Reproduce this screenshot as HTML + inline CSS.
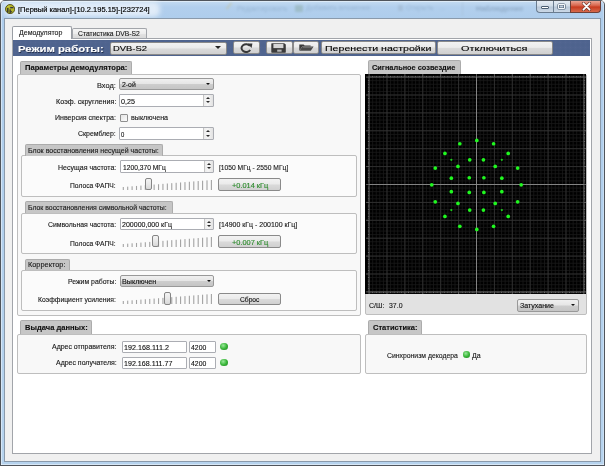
<!DOCTYPE html>
<html><head><meta charset="utf-8"><style>
html,body{margin:0;padding:0;width:605px;height:466px;overflow:hidden;background:#fff}
#root{position:relative;width:605px;height:466px;overflow:hidden;font-family:"Liberation Sans", sans-serif;filter:blur(0.3px)}
#root div{position:absolute}
.t{white-space:nowrap;transform-origin:0 0}
svg{display:block}
</style></head><body><div id="root">
<div style="left:0;top:0;width:605px;height:466px;background:#50555c;border-radius:5px 5px 0 0"></div>
<div style="left:1px;top:1px;width:603px;height:464px;background:linear-gradient(180deg,#c4dbf1 0px,#b2cfed 6px,#aecdec 18px,#b6d3ee 100%);border-radius:4px 4px 0 0;box-shadow:inset 1px 0 0 rgba(255,255,255,0.45),inset -1px 0 0 rgba(255,255,255,0.3),inset 0 -1px 0 rgba(255,255,255,0.45)"></div>
<div style="left:4px;top:2px;width:156px;height:15px;background:rgba(240,246,252,0.75);border-radius:6px;filter:blur(2.5px)"></div>
<div style="left:1px;top:1px;width:603px;height:1px;background:rgba(255,255,255,0.45)"></div>
<div style="left:0;top:0;width:605px;height:18px;filter:blur(0.9px);opacity:0.45"><div style="left:225px;top:5px;width:8px;height:2px;background:#c8c090;transform:rotate(-50deg)"></div><div class="t" style="left:237px;top:4px;font-size:7.3px;color:#7f9cb8">Редактировать</div><div style="left:295px;top:5px;width:8px;height:7px;background:#8aa8a0;border-radius:1px"></div><div class="t" style="left:306px;top:4px;font-size:7px;color:#7f9cb8">Добавить вложение</div><div style="left:398px;top:5px;width:5px;height:6px;background:#9ab0c6"></div><div class="t" style="left:406px;top:4px;font-size:7px;color:#7f9cb8">Открыть &nbsp; ...</div><div style="left:462px;top:2px;width:1px;height:14px;background:#9fb6cc"></div><div class="t" style="left:476px;top:4px;font-size:7.5px;font-weight:700;color:#6d859e">Наблюдение</div></div>
<div style="left:4.00px;top:17.50px;width:597.00px;height:444.00px;background:#f0f0f0;border:1px solid #8a9aab;box-sizing:border-box"></div>
<div style="left:5.1px;top:4px;width:10.2px;height:10.2px"><svg width="10.2" height="10.2" viewBox="0 0 10.2 10.2"><circle cx="5.1" cy="5.1" r="4.6" fill="#b4b428" stroke="#4d4d14" stroke-width="0.9"/><path d="M2.6 2.8 Q3.6 2 4.4 2.4" stroke="#d8d860" stroke-width="0.8" fill="none"/><rect x="2.1" y="4.0" width="1.4" height="4.6" fill="#33332f"/><rect x="5.2" y="3.0" width="3.2" height="1.3" fill="#363644"/><rect x="4.5" y="5.4" width="1.3" height="3.9" fill="#33332f"/><path d="M5.6 6.6 L7.4 7.8 L5.6 9.0 Z" fill="#3c3c3a"/></svg></div>
<div class="t" style="left:18.30px;top:5px;font-size:7.558px;line-height:9.070px;color:#000;font-weight:400;transform:scaleX(0.9928);-webkit-text-stroke:0.18px #000;">[Первый канал]-[10.2.195.15]-[232724]</div>
<div style="left:536.00px;top:0.50px;width:17.50px;height:12.00px;background:linear-gradient(180deg,#e4ebf3,#d0dbe7 45%,#b9c8d9 55%,#cbd8e6);border:1px solid #6a7c90;border-top:none;border-right:none;border-radius:0 0 0 4px;box-sizing:border-box"></div>
<div style="left:553.30px;top:0.50px;width:16.90px;height:12.00px;background:linear-gradient(180deg,#e4ebf3,#d0dbe7 45%,#b9c8d9 55%,#cbd8e6);border:1px solid #6a7c90;border-top:none;border-right:none;box-sizing:border-box"></div>
<div style="left:570.00px;top:0.50px;width:30.80px;height:12.00px;background:linear-gradient(180deg,#eaa594,#d9684f 40%,#c83c20 55%,#d76a4c);border:1px solid #6e4038;border-top:none;border-radius:0 0 4px 0;box-sizing:border-box"></div>
<div style="left:541.40px;top:6.00px;width:7.40px;height:3.20px;background:#fff;border:0.8px solid #4a5d72;border-radius:1px;box-sizing:border-box"></div>
<div style="left:558.00px;top:3.60px;width:7.20px;height:5.80px;border:1.5px solid #f6f8fa;box-shadow:0 0 0 0.6px #4a5d72, inset 0 0 0 0.6px #4a5d72;border-radius:1px;box-sizing:border-box"></div>
<div style="left:580.5px;top:2.2px;width:11px;height:9px"><svg width="11" height="9" viewBox="0 0 11 9"><path d="M2.4 1.3L8.6 7.7M8.6 1.3L2.4 7.7" stroke="#6a3328" stroke-width="3" stroke-linecap="round"/><path d="M2.4 1.3L8.6 7.7M8.6 1.3L2.4 7.7" stroke="#fff" stroke-width="1.8" stroke-linecap="round"/></svg></div>
<div style="left:12.00px;top:38.00px;width:580.00px;height:415.60px;background:#fff;border:1px solid #a2a5aa;box-sizing:border-box"></div>
<div style="left:71.80px;top:27.80px;width:75.20px;height:10.70px;background:linear-gradient(180deg,#f6f6f6,#ededed 50%,#e3e3e3 51%,#dadada);border:1px solid #a2a5aa;border-bottom:none;border-radius:2px 2px 0 0;box-sizing:border-box"></div>
<div class="t" style="left:77.60px;top:30px;font-size:7.122px;line-height:8.546px;color:#1a1a1a;font-weight:400;transform:scaleX(0.9522);-webkit-text-stroke:0.12px #1a1a1a;">Статистика DVB-S2</div>
<div style="left:12.00px;top:25.70px;width:60.30px;height:13.50px;background:#fff;border:1px solid #9a9ea4;border-bottom:none;border-radius:2px 2px 0 0;box-sizing:border-box"></div>
<div class="t" style="left:19.30px;top:29px;font-size:7.267px;line-height:8.720px;color:#1a1a1a;font-weight:400;transform:scaleX(0.9653);-webkit-text-stroke:0.12px #1a1a1a;">Демодулятор</div>
<div style="left:13px;top:40px;width:577.3px;height:15.8px;background-color:#4a5f8b;background-image:radial-gradient(circle,rgba(255,255,255,0.05) 0.6px,transparent 1px),radial-gradient(circle,rgba(255,255,255,0.05) 0.6px,transparent 1px);background-size:2.5px 2.5px;background-position:0 0,1.25px 1.25px"></div>
<div class="t" style="left:17.80px;top:44px;font-size:9.012px;line-height:10.814px;color:#fff;font-weight:700;transform:scaleX(1.2585);-webkit-text-stroke:0.12px #fff;text-shadow:0.5px 0.5px 0.6px #1a2540;">Режим работы:</div>
<div style="left:110.20px;top:41.80px;width:116.50px;height:12.80px;background:linear-gradient(180deg,#f2f2f2 0%,#ebebeb 45%,#dadada 54%,#d0d0d0 100%);border:1px solid #8a8a8a;border-radius:2px;box-sizing:border-box;"></div>
<div class="t" style="left:113.40px;top:45px;font-size:7.267px;line-height:8.720px;color:#000;font-weight:400;transform:scaleX(1.2953);-webkit-text-stroke:0.12px #000;">DVB-S2</div>
<div style="left:214.5px;top:46.3px;width:0;height:0;border-left:3px solid transparent;border-right:3px solid transparent;border-top:3.5px solid #222"></div>
<div style="left:233.30px;top:41.20px;width:26.40px;height:13.30px;background:linear-gradient(180deg,#f2f2f2 0%,#ebebeb 45%,#dadada 54%,#d0d0d0 100%);border:1px solid #8a8a8a;border-radius:2px;box-sizing:border-box;"></div>
<div style="left:239px;top:42.8px;width:14px;height:10px"><svg width="14" height="10" viewBox="0 0 14 10"><path d="M11.0 3.0 A4.6 3.9 0 1 0 11.2 6.9" fill="none" stroke="#383838" stroke-width="2.0"/><path d="M8.6 0.4 L13.4 0.6 L12.6 5.0 Z" fill="#383838"/></svg></div>
<div style="left:266.20px;top:41.20px;width:26.80px;height:13.30px;background:linear-gradient(180deg,#f2f2f2 0%,#ebebeb 45%,#dadada 54%,#d0d0d0 100%);border:1px solid #8a8a8a;border-radius:2px;box-sizing:border-box;"></div>
<div style="left:271.4px;top:42.9px;width:15px;height:10px"><svg width="15" height="10" viewBox="0 0 15 10"><path d="M0.3 0.8 Q0.3 0.2 0.9 0.2 H13.2 L14.8 1.6 V9.1 Q14.8 9.7 14.2 9.7 H0.9 Q0.3 9.7 0.3 9.1 Z" fill="#3a3a3a"/><rect x="2.4" y="0.9" width="10" height="4.2" fill="#d6d6d6"/><rect x="6.2" y="6.6" width="4.4" height="2.1" fill="#b8b8b8"/></svg></div>
<div style="left:293.40px;top:41.20px;width:26.00px;height:13.30px;background:linear-gradient(180deg,#f2f2f2 0%,#ebebeb 45%,#dadada 54%,#d0d0d0 100%);border:1px solid #8a8a8a;border-radius:2px;box-sizing:border-box;"></div>
<div style="left:298.8px;top:44px;width:15px;height:7px"><svg width="15" height="7" viewBox="0 0 15 7"><path d="M0.3 0.5 H4.6 L5.6 1.4 H11.6 V2.6 H3.2 L0.3 6.8 Z" fill="#3a3a3a"/><path d="M3.4 2.6 H14.6 L11.8 6.8 H0.4 Z" fill="#4a4a4a"/><path d="M4 3.2 H13.4 L13 3.8 H3.6 Z" fill="#8a8a8a"/></svg></div>
<div style="left:320.60px;top:41.20px;width:115.30px;height:13.30px;background:linear-gradient(180deg,#f2f2f2 0%,#ebebeb 45%,#dadada 54%,#d0d0d0 100%);border:1px solid #8a8a8a;border-radius:2px;box-sizing:border-box;"></div>
<div class="t" style="left:324.80px;top:44px;font-size:7.849px;line-height:9.419px;color:#000;font-weight:400;transform:scaleX(1.3550);-webkit-text-stroke:0.12px #000;">Перенести настройки</div>
<div style="left:437.20px;top:41.40px;width:115.60px;height:13.30px;background:linear-gradient(180deg,#f2f2f2 0%,#ebebeb 45%,#dadada 54%,#d0d0d0 100%);border:1px solid #8a8a8a;border-radius:2px;box-sizing:border-box;"></div>
<div class="t" style="left:460.80px;top:44px;font-size:7.558px;line-height:9.070px;color:#000;font-weight:400;transform:scaleX(1.4433);-webkit-text-stroke:0.12px #000;">Отключиться</div>
<div style="left:17.20px;top:73.60px;width:343.80px;height:242.00px;background:#f8f8f8;border:1px solid #bebebe;border-radius:2px;box-sizing:border-box"></div>
<div style="left:20.10px;top:60.60px;width:111.50px;height:13.40px;background:#c6c6c6;border:1px solid #acacac;border-bottom:none;border-radius:2px 2px 0 0;box-sizing:border-box"></div>
<div class="t" style="left:24.50px;top:63px;font-size:7.776px;line-height:9.331px;color:#111;font-weight:700;transform:scaleX(0.9797);-webkit-text-stroke:0.12px #111;">Параметры демодулятора:</div>
<div class="t" style="left:97.20px;top:82px;font-size:7.122px;line-height:8.546px;color:#161616;font-weight:400;transform:scaleX(1.0393);-webkit-text-stroke:0.12px #161616;">Вход:</div>
<div style="left:119.40px;top:78.20px;width:94.40px;height:12.30px;background:linear-gradient(180deg,#f0f0f0 0%,#e6e6e6 46%,#cdcdcd 54%,#c5c5c5 100%);border:1px solid #999;border-radius:2px;box-sizing:border-box"></div>
<div style="left:205.80px;top:82.85px;width:0;height:0;border-left:2.1px solid transparent;border-right:2.1px solid transparent;border-top:2.9px solid #111"></div>
<div class="t" style="left:122.00px;top:81px;font-size:7.122px;line-height:8.546px;color:#111;font-weight:400;transform:scaleX(0.9669);-webkit-text-stroke:0.12px #111;">2-ой</div>
<div class="t" style="left:55.50px;top:98px;font-size:7.122px;line-height:8.546px;color:#161616;font-weight:400;transform:scaleX(1.0086);-webkit-text-stroke:0.12px #161616;">Коэф. скругления:</div>
<div style="left:119.40px;top:94.30px;width:94.40px;height:12.40px;background:#fff;border:1px solid #abadb3;border-radius:1px;box-sizing:border-box"></div>
<div style="left:203.30px;top:95.30px;width:9.50px;height:10.40px;background:linear-gradient(90deg,#ececec,#f6f6f6 40%,#e2e2e2);border-left:1px solid #c4c4c4;box-sizing:border-box"></div>
<div style="left:206.10px;top:97.10px;width:0;height:0;border-left:2px solid transparent;border-right:2px solid transparent;border-bottom:2.6px solid #2a2a2a"></div>
<div style="left:206.10px;top:101.30px;width:0;height:0;border-left:2px solid transparent;border-right:2px solid transparent;border-top:2.6px solid #2a2a2a"></div>
<div class="t" style="left:121.20px;top:98px;font-size:7.122px;line-height:8.546px;color:#111;font-weight:400;transform:scaleX(1.0101);-webkit-text-stroke:0.12px #111;">0,25</div>
<div class="t" style="left:55.00px;top:114px;font-size:7.122px;line-height:8.546px;color:#161616;font-weight:400;transform:scaleX(0.9872);-webkit-text-stroke:0.12px #161616;">Инверсия спектра:</div>
<div style="left:120.00px;top:113.80px;width:7.60px;height:7.80px;background:linear-gradient(135deg,#e4e4e4,#fbfbfb);border:1px solid #8f8f8f;border-radius:1px;box-sizing:border-box"></div>
<div class="t" style="left:130.50px;top:114px;font-size:7.122px;line-height:8.546px;color:#161616;font-weight:400;transform:scaleX(1.0023);-webkit-text-stroke:0.12px #161616;">выключена</div>
<div class="t" style="left:78.20px;top:130px;font-size:7.122px;line-height:8.546px;color:#161616;font-weight:400;transform:scaleX(0.9739);-webkit-text-stroke:0.12px #161616;">Скремблер:</div>
<div style="left:119.40px;top:127.30px;width:94.40px;height:12.60px;background:#fff;border:1px solid #abadb3;border-radius:1px;box-sizing:border-box"></div>
<div style="left:203.30px;top:128.30px;width:9.50px;height:10.60px;background:linear-gradient(90deg,#ececec,#f6f6f6 40%,#e2e2e2);border-left:1px solid #c4c4c4;box-sizing:border-box"></div>
<div style="left:206.10px;top:130.10px;width:0;height:0;border-left:2px solid transparent;border-right:2px solid transparent;border-bottom:2.6px solid #2a2a2a"></div>
<div style="left:206.10px;top:134.50px;width:0;height:0;border-left:2px solid transparent;border-right:2px solid transparent;border-top:2.6px solid #2a2a2a"></div>
<div class="t" style="left:121.20px;top:131px;font-size:7.122px;line-height:8.546px;color:#111;font-weight:400;transform:scaleX(0.8334);-webkit-text-stroke:0.12px #111;">0</div>
<div style="left:21.40px;top:155.20px;width:335.20px;height:41.60px;background:#fbfbfb;border:1px solid #bebebe;border-radius:2px;box-sizing:border-box"></div>
<div style="left:24.90px;top:144.00px;width:138.20px;height:11.60px;background:#c6c6c6;border:1px solid #acacac;border-bottom:none;border-radius:2px 2px 0 0;box-sizing:border-box"></div>
<div class="t" style="left:28.00px;top:147px;font-size:7.122px;line-height:8.546px;color:#1a1a1a;font-weight:400;transform:scaleX(0.9888);-webkit-text-stroke:0.12px #1a1a1a;">Блок восстановления несущей частоты:</div>
<div class="t" style="left:57.60px;top:164px;font-size:7.122px;line-height:8.546px;color:#161616;font-weight:400;transform:scaleX(0.9862);-webkit-text-stroke:0.12px #161616;">Несущая частота:</div>
<div style="left:120.00px;top:160.30px;width:94.30px;height:12.50px;background:#fff;border:1px solid #abadb3;border-radius:1px;box-sizing:border-box"></div>
<div style="left:203.80px;top:161.30px;width:9.50px;height:10.50px;background:linear-gradient(90deg,#ececec,#f6f6f6 40%,#e2e2e2);border-left:1px solid #c4c4c4;box-sizing:border-box"></div>
<div style="left:206.60px;top:163.10px;width:0;height:0;border-left:2px solid transparent;border-right:2px solid transparent;border-bottom:2.6px solid #2a2a2a"></div>
<div style="left:206.60px;top:167.40px;width:0;height:0;border-left:2px solid transparent;border-right:2px solid transparent;border-top:2.6px solid #2a2a2a"></div>
<div class="t" style="left:122.60px;top:164px;font-size:7.122px;line-height:8.546px;color:#111;font-weight:400;transform:scaleX(0.9418);-webkit-text-stroke:0.12px #111;">1200,370 МГц</div>
<div class="t" style="left:218.60px;top:164px;font-size:7.122px;line-height:8.546px;color:#161616;font-weight:400;transform:scaleX(0.9420);-webkit-text-stroke:0.12px #161616;">[1050 МГц - 2550 МГц]</div>
<div class="t" style="left:70.30px;top:182px;font-size:7.122px;line-height:8.546px;color:#161616;font-weight:400;transform:scaleX(0.9443);-webkit-text-stroke:0.12px #161616;">Полоса ФАПЧ:</div>
<div style="left:120px;top:175.60px;width:100px;height:14px"><svg width="100" height="14" viewBox="0 0 100 14"><rect x="2.75" y="11.00" width="1.1" height="3.00" fill="#a3a3a3"/><rect x="7.15" y="10.65" width="1.1" height="3.35" fill="#a3a3a3"/><rect x="11.56" y="10.30" width="1.1" height="3.70" fill="#a3a3a3"/><rect x="15.96" y="9.95" width="1.1" height="4.05" fill="#a3a3a3"/><rect x="20.37" y="9.60" width="1.1" height="4.40" fill="#a3a3a3"/><rect x="24.77" y="9.25" width="1.1" height="4.75" fill="#a3a3a3"/><rect x="29.18" y="8.90" width="1.1" height="5.10" fill="#a3a3a3"/><rect x="33.58" y="8.55" width="1.1" height="5.45" fill="#a3a3a3"/><rect x="37.99" y="8.20" width="1.1" height="5.80" fill="#a3a3a3"/><rect x="42.39" y="7.85" width="1.1" height="6.15" fill="#a3a3a3"/><rect x="46.80" y="7.50" width="1.1" height="6.50" fill="#a3a3a3"/><rect x="51.20" y="7.15" width="1.1" height="6.85" fill="#a3a3a3"/><rect x="55.61" y="6.80" width="1.1" height="7.20" fill="#a3a3a3"/><rect x="60.02" y="6.45" width="1.1" height="7.55" fill="#a3a3a3"/><rect x="64.42" y="6.10" width="1.1" height="7.90" fill="#a3a3a3"/><rect x="68.83" y="5.75" width="1.1" height="8.25" fill="#a3a3a3"/><rect x="73.23" y="5.40" width="1.1" height="8.60" fill="#a3a3a3"/><rect x="77.64" y="5.05" width="1.1" height="8.95" fill="#a3a3a3"/><rect x="82.04" y="4.70" width="1.1" height="9.30" fill="#a3a3a3"/><rect x="86.45" y="4.35" width="1.1" height="9.65" fill="#a3a3a3"/><rect x="90.85" y="4.00" width="1.1" height="10.00" fill="#a3a3a3"/></svg></div>
<div style="left:144.50px;top:177.80px;width:7.20px;height:12.20px;background:linear-gradient(180deg,#f4f4f4,#e8e8e8 50%,#d8d8d8);border:1px solid #858585;border-radius:2px;box-sizing:border-box"></div>
<div style="left:218.20px;top:178.20px;width:63.20px;height:12.40px;background:linear-gradient(180deg,#f2f2f2 0%,#ebebeb 45%,#dadada 54%,#d0d0d0 100%);border:1px solid #8a8a8a;border-radius:2px;box-sizing:border-box;border-color:#8a8a8a;"></div>
<div class="t" style="left:231.80px;top:182px;font-size:7.122px;line-height:8.546px;color:#2a8a2a;font-weight:400;transform:scaleX(1.0397);-webkit-text-stroke:0.12px #2a8a2a;">+0.014 кГц</div>
<div style="left:21.40px;top:212.60px;width:335.20px;height:41.40px;background:#fbfbfb;border:1px solid #bebebe;border-radius:2px;box-sizing:border-box"></div>
<div style="left:24.90px;top:201.20px;width:148.00px;height:11.60px;background:#c6c6c6;border:1px solid #acacac;border-bottom:none;border-radius:2px 2px 0 0;box-sizing:border-box"></div>
<div class="t" style="left:28.00px;top:204px;font-size:7.122px;line-height:8.546px;color:#1a1a1a;font-weight:400;transform:scaleX(0.9677);-webkit-text-stroke:0.12px #1a1a1a;">Блок восстановления символьной частоты:</div>
<div class="t" style="left:47.80px;top:221px;font-size:7.122px;line-height:8.546px;color:#161616;font-weight:400;transform:scaleX(0.9679);-webkit-text-stroke:0.12px #161616;">Символьная частота:</div>
<div style="left:120.00px;top:217.80px;width:94.30px;height:12.40px;background:#fff;border:1px solid #abadb3;border-radius:1px;box-sizing:border-box"></div>
<div style="left:203.80px;top:218.80px;width:9.50px;height:10.40px;background:linear-gradient(90deg,#ececec,#f6f6f6 40%,#e2e2e2);border-left:1px solid #c4c4c4;box-sizing:border-box"></div>
<div style="left:206.60px;top:220.60px;width:0;height:0;border-left:2px solid transparent;border-right:2px solid transparent;border-bottom:2.6px solid #2a2a2a"></div>
<div style="left:206.60px;top:224.80px;width:0;height:0;border-left:2px solid transparent;border-right:2px solid transparent;border-top:2.6px solid #2a2a2a"></div>
<div class="t" style="left:121.90px;top:221px;font-size:7.122px;line-height:8.546px;color:#111;font-weight:400;transform:scaleX(0.9890);-webkit-text-stroke:0.12px #111;">200000,000 кГц</div>
<div class="t" style="left:218.60px;top:221px;font-size:7.122px;line-height:8.546px;color:#161616;font-weight:400;transform:scaleX(0.9810);-webkit-text-stroke:0.12px #161616;">[14900 кГц - 200100 кГц]</div>
<div class="t" style="left:70.30px;top:240px;font-size:7.122px;line-height:8.546px;color:#161616;font-weight:400;transform:scaleX(0.9443);-webkit-text-stroke:0.12px #161616;">Полоса ФАПЧ:</div>
<div style="left:120px;top:232.60px;width:100px;height:14px"><svg width="100" height="14" viewBox="0 0 100 14"><rect x="2.75" y="11.00" width="1.1" height="3.00" fill="#a3a3a3"/><rect x="7.15" y="10.65" width="1.1" height="3.35" fill="#a3a3a3"/><rect x="11.56" y="10.30" width="1.1" height="3.70" fill="#a3a3a3"/><rect x="15.96" y="9.95" width="1.1" height="4.05" fill="#a3a3a3"/><rect x="20.37" y="9.60" width="1.1" height="4.40" fill="#a3a3a3"/><rect x="24.77" y="9.25" width="1.1" height="4.75" fill="#a3a3a3"/><rect x="29.18" y="8.90" width="1.1" height="5.10" fill="#a3a3a3"/><rect x="33.58" y="8.55" width="1.1" height="5.45" fill="#a3a3a3"/><rect x="37.99" y="8.20" width="1.1" height="5.80" fill="#a3a3a3"/><rect x="42.39" y="7.85" width="1.1" height="6.15" fill="#a3a3a3"/><rect x="46.80" y="7.50" width="1.1" height="6.50" fill="#a3a3a3"/><rect x="51.20" y="7.15" width="1.1" height="6.85" fill="#a3a3a3"/><rect x="55.61" y="6.80" width="1.1" height="7.20" fill="#a3a3a3"/><rect x="60.02" y="6.45" width="1.1" height="7.55" fill="#a3a3a3"/><rect x="64.42" y="6.10" width="1.1" height="7.90" fill="#a3a3a3"/><rect x="68.83" y="5.75" width="1.1" height="8.25" fill="#a3a3a3"/><rect x="73.23" y="5.40" width="1.1" height="8.60" fill="#a3a3a3"/><rect x="77.64" y="5.05" width="1.1" height="8.95" fill="#a3a3a3"/><rect x="82.04" y="4.70" width="1.1" height="9.30" fill="#a3a3a3"/><rect x="86.45" y="4.35" width="1.1" height="9.65" fill="#a3a3a3"/><rect x="90.85" y="4.00" width="1.1" height="10.00" fill="#a3a3a3"/></svg></div>
<div style="left:151.60px;top:234.80px;width:7.20px;height:12.20px;background:linear-gradient(180deg,#f4f4f4,#e8e8e8 50%,#d8d8d8);border:1px solid #858585;border-radius:2px;box-sizing:border-box"></div>
<div style="left:218.20px;top:235.40px;width:63.20px;height:12.40px;background:linear-gradient(180deg,#f2f2f2 0%,#ebebeb 45%,#dadada 54%,#d0d0d0 100%);border:1px solid #8a8a8a;border-radius:2px;box-sizing:border-box;border-color:#8a8a8a;"></div>
<div class="t" style="left:231.80px;top:239px;font-size:7.122px;line-height:8.546px;color:#2a8a2a;font-weight:400;transform:scaleX(1.0397);-webkit-text-stroke:0.12px #2a8a2a;">+0.007 кГц</div>
<div style="left:21.40px;top:270.00px;width:335.20px;height:41.20px;background:#fbfbfb;border:1px solid #bebebe;border-radius:2px;box-sizing:border-box"></div>
<div style="left:24.90px;top:258.80px;width:45.60px;height:11.60px;background:#c6c6c6;border:1px solid #acacac;border-bottom:none;border-radius:2px 2px 0 0;box-sizing:border-box"></div>
<div class="t" style="left:28.00px;top:261px;font-size:7.122px;line-height:8.546px;color:#1a1a1a;font-weight:400;transform:scaleX(1.0338);-webkit-text-stroke:0.12px #1a1a1a;">Корректор:</div>
<div class="t" style="left:67.60px;top:278px;font-size:7.122px;line-height:8.546px;color:#161616;font-weight:400;transform:scaleX(0.9660);-webkit-text-stroke:0.12px #161616;">Режим работы:</div>
<div style="left:120.30px;top:275.20px;width:94.20px;height:12.20px;background:linear-gradient(180deg,#f0f0f0 0%,#e6e6e6 46%,#cdcdcd 54%,#c5c5c5 100%);border:1px solid #999;border-radius:2px;box-sizing:border-box"></div>
<div style="left:206.50px;top:279.80px;width:0;height:0;border-left:2.1px solid transparent;border-right:2.1px solid transparent;border-top:2.9px solid #111"></div>
<div class="t" style="left:121.90px;top:278px;font-size:7.122px;line-height:8.546px;color:#111;font-weight:400;transform:scaleX(1.0086);-webkit-text-stroke:0.12px #111;">Выключен</div>
<div class="t" style="left:38.00px;top:296px;font-size:7.122px;line-height:8.546px;color:#161616;font-weight:400;transform:scaleX(0.9568);-webkit-text-stroke:0.12px #161616;">Коэффициент усиления:</div>
<div style="left:120px;top:290.20px;width:100px;height:14px"><svg width="100" height="14" viewBox="0 0 100 14"><rect x="2.75" y="11.00" width="1.1" height="3.00" fill="#a3a3a3"/><rect x="7.15" y="10.65" width="1.1" height="3.35" fill="#a3a3a3"/><rect x="11.56" y="10.30" width="1.1" height="3.70" fill="#a3a3a3"/><rect x="15.96" y="9.95" width="1.1" height="4.05" fill="#a3a3a3"/><rect x="20.37" y="9.60" width="1.1" height="4.40" fill="#a3a3a3"/><rect x="24.77" y="9.25" width="1.1" height="4.75" fill="#a3a3a3"/><rect x="29.18" y="8.90" width="1.1" height="5.10" fill="#a3a3a3"/><rect x="33.58" y="8.55" width="1.1" height="5.45" fill="#a3a3a3"/><rect x="37.99" y="8.20" width="1.1" height="5.80" fill="#a3a3a3"/><rect x="42.39" y="7.85" width="1.1" height="6.15" fill="#a3a3a3"/><rect x="46.80" y="7.50" width="1.1" height="6.50" fill="#a3a3a3"/><rect x="51.20" y="7.15" width="1.1" height="6.85" fill="#a3a3a3"/><rect x="55.61" y="6.80" width="1.1" height="7.20" fill="#a3a3a3"/><rect x="60.02" y="6.45" width="1.1" height="7.55" fill="#a3a3a3"/><rect x="64.42" y="6.10" width="1.1" height="7.90" fill="#a3a3a3"/><rect x="68.83" y="5.75" width="1.1" height="8.25" fill="#a3a3a3"/><rect x="73.23" y="5.40" width="1.1" height="8.60" fill="#a3a3a3"/><rect x="77.64" y="5.05" width="1.1" height="8.95" fill="#a3a3a3"/><rect x="82.04" y="4.70" width="1.1" height="9.30" fill="#a3a3a3"/><rect x="86.45" y="4.35" width="1.1" height="9.65" fill="#a3a3a3"/><rect x="90.85" y="4.00" width="1.1" height="10.00" fill="#a3a3a3"/></svg></div>
<div style="left:163.80px;top:292.40px;width:7.20px;height:12.20px;background:linear-gradient(180deg,#f4f4f4,#e8e8e8 50%,#d8d8d8);border:1px solid #858585;border-radius:2px;box-sizing:border-box"></div>
<div style="left:218.20px;top:292.90px;width:63.20px;height:12.60px;background:linear-gradient(180deg,#f2f2f2 0%,#ebebeb 45%,#dadada 54%,#d0d0d0 100%);border:1px solid #8a8a8a;border-radius:2px;box-sizing:border-box;border-color:#8a8a8a;"></div>
<div class="t" style="left:239.80px;top:296px;font-size:7.122px;line-height:8.546px;color:#111;font-weight:400;transform:scaleX(0.9370);-webkit-text-stroke:0.12px #111;">Сброс</div>
<div style="left:17.20px;top:333.60px;width:343.80px;height:40.60px;background:#f8f8f8;border:1px solid #bebebe;border-radius:2px;box-sizing:border-box"></div>
<div style="left:20.10px;top:320.40px;width:72.20px;height:13.60px;background:#c6c6c6;border:1px solid #acacac;border-bottom:none;border-radius:2px 2px 0 0;box-sizing:border-box"></div>
<div class="t" style="left:24.50px;top:323px;font-size:7.776px;line-height:9.331px;color:#111;font-weight:700;transform:scaleX(0.9747);-webkit-text-stroke:0.12px #111;">Выдача данных:</div>
<div class="t" style="left:52.00px;top:343px;font-size:7.122px;line-height:8.546px;color:#161616;font-weight:400;transform:scaleX(0.9792);-webkit-text-stroke:0.12px #161616;">Адрес отправителя:</div>
<div style="left:121.50px;top:340.50px;width:65.90px;height:12.00px;background:#fff;border:1px solid #abadb3;border-radius:1px;box-sizing:border-box"></div>
<div class="t" style="left:124.00px;top:344px;font-size:7.122px;line-height:8.546px;color:#111;font-weight:400;transform:scaleX(1.0114);-webkit-text-stroke:0.12px #111;">192.168.111.2</div>
<div style="left:189.40px;top:340.50px;width:26.20px;height:12.00px;background:#fff;border:1px solid #abadb3;border-radius:1px;box-sizing:border-box"></div>
<div class="t" style="left:191.00px;top:344px;font-size:7.122px;line-height:8.546px;color:#111;font-weight:400;transform:scaleX(0.9655);-webkit-text-stroke:0.12px #111;">4200</div>
<div style="left:220.30px;top:342.60px;width:7.8px;height:7.8px;border-radius:50%;background:radial-gradient(circle at 40% 35%,#9ae89a,#3cb83c 50%,#1d7d1d 100%);"></div>
<div class="t" style="left:55.60px;top:359px;font-size:7.122px;line-height:8.546px;color:#161616;font-weight:400;transform:scaleX(0.9797);-webkit-text-stroke:0.12px #161616;">Адрес получателя:</div>
<div style="left:121.50px;top:356.50px;width:65.90px;height:12.20px;background:#fff;border:1px solid #abadb3;border-radius:1px;box-sizing:border-box"></div>
<div class="t" style="left:124.00px;top:360px;font-size:7.122px;line-height:8.546px;color:#111;font-weight:400;transform:scaleX(1.0010);-webkit-text-stroke:0.12px #111;">192.168.111.77</div>
<div style="left:189.40px;top:356.50px;width:26.20px;height:12.20px;background:#fff;border:1px solid #abadb3;border-radius:1px;box-sizing:border-box"></div>
<div class="t" style="left:191.00px;top:360px;font-size:7.122px;line-height:8.546px;color:#111;font-weight:400;transform:scaleX(0.9655);-webkit-text-stroke:0.12px #111;">4200</div>
<div style="left:220.30px;top:358.60px;width:7.8px;height:7.8px;border-radius:50%;background:radial-gradient(circle at 40% 35%,#9ae89a,#3cb83c 50%,#1d7d1d 100%);"></div>
<div style="left:365.20px;top:73.60px;width:221.50px;height:241.60px;background:#e2e2e2;border:1px solid #bebebe;border-radius:2px;box-sizing:border-box"></div>
<div style="left:368.30px;top:60.20px;width:92.50px;height:13.80px;background:#c6c6c6;border:1px solid #acacac;border-bottom:none;border-radius:2px 2px 0 0;box-sizing:border-box"></div>
<div class="t" style="left:372.40px;top:63px;font-size:7.776px;line-height:9.331px;color:#111;font-weight:700;transform:scaleX(0.9483);-webkit-text-stroke:0.12px #111;">Сигнальное созвездие</div>
<div style="left:365.00px;top:74.00px;width:221.20px;height:220.40px"><svg width="221.2" height="220.4" viewBox="0 0 221.20 220.40"><rect width="221.20" height="220.40" fill="#000"/><line x1="4.10" y1="3.10" x2="4.10" y2="217.90" stroke="#1b1b1b" stroke-width="0.8"/><line x1="4.10" y1="3.10" x2="218.90" y2="3.10" stroke="#1b1b1b" stroke-width="0.8"/><line x1="7.68" y1="3.10" x2="7.68" y2="217.90" stroke="#1b1b1b" stroke-width="0.8"/><line x1="4.10" y1="6.68" x2="218.90" y2="6.68" stroke="#1b1b1b" stroke-width="0.8"/><line x1="11.26" y1="3.10" x2="11.26" y2="217.90" stroke="#1b1b1b" stroke-width="0.8"/><line x1="4.10" y1="10.26" x2="218.90" y2="10.26" stroke="#1b1b1b" stroke-width="0.8"/><line x1="14.84" y1="3.10" x2="14.84" y2="217.90" stroke="#1b1b1b" stroke-width="0.8"/><line x1="4.10" y1="13.84" x2="218.90" y2="13.84" stroke="#1b1b1b" stroke-width="0.8"/><line x1="18.42" y1="3.10" x2="18.42" y2="217.90" stroke="#1b1b1b" stroke-width="0.8"/><line x1="4.10" y1="17.42" x2="218.90" y2="17.42" stroke="#1b1b1b" stroke-width="0.8"/><line x1="22.00" y1="3.10" x2="22.00" y2="217.90" stroke="#1b1b1b" stroke-width="0.8"/><line x1="4.10" y1="21.00" x2="218.90" y2="21.00" stroke="#1b1b1b" stroke-width="0.8"/><line x1="25.58" y1="3.10" x2="25.58" y2="217.90" stroke="#1b1b1b" stroke-width="0.8"/><line x1="4.10" y1="24.58" x2="218.90" y2="24.58" stroke="#1b1b1b" stroke-width="0.8"/><line x1="29.16" y1="3.10" x2="29.16" y2="217.90" stroke="#1b1b1b" stroke-width="0.8"/><line x1="4.10" y1="28.16" x2="218.90" y2="28.16" stroke="#1b1b1b" stroke-width="0.8"/><line x1="32.74" y1="3.10" x2="32.74" y2="217.90" stroke="#1b1b1b" stroke-width="0.8"/><line x1="4.10" y1="31.74" x2="218.90" y2="31.74" stroke="#1b1b1b" stroke-width="0.8"/><line x1="36.32" y1="3.10" x2="36.32" y2="217.90" stroke="#1b1b1b" stroke-width="0.8"/><line x1="4.10" y1="35.32" x2="218.90" y2="35.32" stroke="#1b1b1b" stroke-width="0.8"/><line x1="39.90" y1="3.10" x2="39.90" y2="217.90" stroke="#1b1b1b" stroke-width="0.8"/><line x1="4.10" y1="38.90" x2="218.90" y2="38.90" stroke="#1b1b1b" stroke-width="0.8"/><line x1="43.48" y1="3.10" x2="43.48" y2="217.90" stroke="#1b1b1b" stroke-width="0.8"/><line x1="4.10" y1="42.48" x2="218.90" y2="42.48" stroke="#1b1b1b" stroke-width="0.8"/><line x1="47.06" y1="3.10" x2="47.06" y2="217.90" stroke="#1b1b1b" stroke-width="0.8"/><line x1="4.10" y1="46.06" x2="218.90" y2="46.06" stroke="#1b1b1b" stroke-width="0.8"/><line x1="50.64" y1="3.10" x2="50.64" y2="217.90" stroke="#1b1b1b" stroke-width="0.8"/><line x1="4.10" y1="49.64" x2="218.90" y2="49.64" stroke="#1b1b1b" stroke-width="0.8"/><line x1="54.22" y1="3.10" x2="54.22" y2="217.90" stroke="#1b1b1b" stroke-width="0.8"/><line x1="4.10" y1="53.22" x2="218.90" y2="53.22" stroke="#1b1b1b" stroke-width="0.8"/><line x1="57.80" y1="3.10" x2="57.80" y2="217.90" stroke="#1b1b1b" stroke-width="0.8"/><line x1="4.10" y1="56.80" x2="218.90" y2="56.80" stroke="#1b1b1b" stroke-width="0.8"/><line x1="61.38" y1="3.10" x2="61.38" y2="217.90" stroke="#1b1b1b" stroke-width="0.8"/><line x1="4.10" y1="60.38" x2="218.90" y2="60.38" stroke="#1b1b1b" stroke-width="0.8"/><line x1="64.96" y1="3.10" x2="64.96" y2="217.90" stroke="#1b1b1b" stroke-width="0.8"/><line x1="4.10" y1="63.96" x2="218.90" y2="63.96" stroke="#1b1b1b" stroke-width="0.8"/><line x1="68.54" y1="3.10" x2="68.54" y2="217.90" stroke="#1b1b1b" stroke-width="0.8"/><line x1="4.10" y1="67.54" x2="218.90" y2="67.54" stroke="#1b1b1b" stroke-width="0.8"/><line x1="72.12" y1="3.10" x2="72.12" y2="217.90" stroke="#1b1b1b" stroke-width="0.8"/><line x1="4.10" y1="71.12" x2="218.90" y2="71.12" stroke="#1b1b1b" stroke-width="0.8"/><line x1="75.70" y1="3.10" x2="75.70" y2="217.90" stroke="#1b1b1b" stroke-width="0.8"/><line x1="4.10" y1="74.70" x2="218.90" y2="74.70" stroke="#1b1b1b" stroke-width="0.8"/><line x1="79.28" y1="3.10" x2="79.28" y2="217.90" stroke="#1b1b1b" stroke-width="0.8"/><line x1="4.10" y1="78.28" x2="218.90" y2="78.28" stroke="#1b1b1b" stroke-width="0.8"/><line x1="82.86" y1="3.10" x2="82.86" y2="217.90" stroke="#1b1b1b" stroke-width="0.8"/><line x1="4.10" y1="81.86" x2="218.90" y2="81.86" stroke="#1b1b1b" stroke-width="0.8"/><line x1="86.44" y1="3.10" x2="86.44" y2="217.90" stroke="#1b1b1b" stroke-width="0.8"/><line x1="4.10" y1="85.44" x2="218.90" y2="85.44" stroke="#1b1b1b" stroke-width="0.8"/><line x1="90.02" y1="3.10" x2="90.02" y2="217.90" stroke="#1b1b1b" stroke-width="0.8"/><line x1="4.10" y1="89.02" x2="218.90" y2="89.02" stroke="#1b1b1b" stroke-width="0.8"/><line x1="93.60" y1="3.10" x2="93.60" y2="217.90" stroke="#1b1b1b" stroke-width="0.8"/><line x1="4.10" y1="92.60" x2="218.90" y2="92.60" stroke="#1b1b1b" stroke-width="0.8"/><line x1="97.18" y1="3.10" x2="97.18" y2="217.90" stroke="#1b1b1b" stroke-width="0.8"/><line x1="4.10" y1="96.18" x2="218.90" y2="96.18" stroke="#1b1b1b" stroke-width="0.8"/><line x1="100.76" y1="3.10" x2="100.76" y2="217.90" stroke="#1b1b1b" stroke-width="0.8"/><line x1="4.10" y1="99.76" x2="218.90" y2="99.76" stroke="#1b1b1b" stroke-width="0.8"/><line x1="104.34" y1="3.10" x2="104.34" y2="217.90" stroke="#1b1b1b" stroke-width="0.8"/><line x1="4.10" y1="103.34" x2="218.90" y2="103.34" stroke="#1b1b1b" stroke-width="0.8"/><line x1="107.92" y1="3.10" x2="107.92" y2="217.90" stroke="#1b1b1b" stroke-width="0.8"/><line x1="4.10" y1="106.92" x2="218.90" y2="106.92" stroke="#1b1b1b" stroke-width="0.8"/><line x1="111.50" y1="3.10" x2="111.50" y2="217.90" stroke="#1b1b1b" stroke-width="0.8"/><line x1="4.10" y1="110.50" x2="218.90" y2="110.50" stroke="#1b1b1b" stroke-width="0.8"/><line x1="115.08" y1="3.10" x2="115.08" y2="217.90" stroke="#1b1b1b" stroke-width="0.8"/><line x1="4.10" y1="114.08" x2="218.90" y2="114.08" stroke="#1b1b1b" stroke-width="0.8"/><line x1="118.66" y1="3.10" x2="118.66" y2="217.90" stroke="#1b1b1b" stroke-width="0.8"/><line x1="4.10" y1="117.66" x2="218.90" y2="117.66" stroke="#1b1b1b" stroke-width="0.8"/><line x1="122.24" y1="3.10" x2="122.24" y2="217.90" stroke="#1b1b1b" stroke-width="0.8"/><line x1="4.10" y1="121.24" x2="218.90" y2="121.24" stroke="#1b1b1b" stroke-width="0.8"/><line x1="125.82" y1="3.10" x2="125.82" y2="217.90" stroke="#1b1b1b" stroke-width="0.8"/><line x1="4.10" y1="124.82" x2="218.90" y2="124.82" stroke="#1b1b1b" stroke-width="0.8"/><line x1="129.40" y1="3.10" x2="129.40" y2="217.90" stroke="#1b1b1b" stroke-width="0.8"/><line x1="4.10" y1="128.40" x2="218.90" y2="128.40" stroke="#1b1b1b" stroke-width="0.8"/><line x1="132.98" y1="3.10" x2="132.98" y2="217.90" stroke="#1b1b1b" stroke-width="0.8"/><line x1="4.10" y1="131.98" x2="218.90" y2="131.98" stroke="#1b1b1b" stroke-width="0.8"/><line x1="136.56" y1="3.10" x2="136.56" y2="217.90" stroke="#1b1b1b" stroke-width="0.8"/><line x1="4.10" y1="135.56" x2="218.90" y2="135.56" stroke="#1b1b1b" stroke-width="0.8"/><line x1="140.14" y1="3.10" x2="140.14" y2="217.90" stroke="#1b1b1b" stroke-width="0.8"/><line x1="4.10" y1="139.14" x2="218.90" y2="139.14" stroke="#1b1b1b" stroke-width="0.8"/><line x1="143.72" y1="3.10" x2="143.72" y2="217.90" stroke="#1b1b1b" stroke-width="0.8"/><line x1="4.10" y1="142.72" x2="218.90" y2="142.72" stroke="#1b1b1b" stroke-width="0.8"/><line x1="147.30" y1="3.10" x2="147.30" y2="217.90" stroke="#1b1b1b" stroke-width="0.8"/><line x1="4.10" y1="146.30" x2="218.90" y2="146.30" stroke="#1b1b1b" stroke-width="0.8"/><line x1="150.88" y1="3.10" x2="150.88" y2="217.90" stroke="#1b1b1b" stroke-width="0.8"/><line x1="4.10" y1="149.88" x2="218.90" y2="149.88" stroke="#1b1b1b" stroke-width="0.8"/><line x1="154.46" y1="3.10" x2="154.46" y2="217.90" stroke="#1b1b1b" stroke-width="0.8"/><line x1="4.10" y1="153.46" x2="218.90" y2="153.46" stroke="#1b1b1b" stroke-width="0.8"/><line x1="158.04" y1="3.10" x2="158.04" y2="217.90" stroke="#1b1b1b" stroke-width="0.8"/><line x1="4.10" y1="157.04" x2="218.90" y2="157.04" stroke="#1b1b1b" stroke-width="0.8"/><line x1="161.62" y1="3.10" x2="161.62" y2="217.90" stroke="#1b1b1b" stroke-width="0.8"/><line x1="4.10" y1="160.62" x2="218.90" y2="160.62" stroke="#1b1b1b" stroke-width="0.8"/><line x1="165.20" y1="3.10" x2="165.20" y2="217.90" stroke="#1b1b1b" stroke-width="0.8"/><line x1="4.10" y1="164.20" x2="218.90" y2="164.20" stroke="#1b1b1b" stroke-width="0.8"/><line x1="168.78" y1="3.10" x2="168.78" y2="217.90" stroke="#1b1b1b" stroke-width="0.8"/><line x1="4.10" y1="167.78" x2="218.90" y2="167.78" stroke="#1b1b1b" stroke-width="0.8"/><line x1="172.36" y1="3.10" x2="172.36" y2="217.90" stroke="#1b1b1b" stroke-width="0.8"/><line x1="4.10" y1="171.36" x2="218.90" y2="171.36" stroke="#1b1b1b" stroke-width="0.8"/><line x1="175.94" y1="3.10" x2="175.94" y2="217.90" stroke="#1b1b1b" stroke-width="0.8"/><line x1="4.10" y1="174.94" x2="218.90" y2="174.94" stroke="#1b1b1b" stroke-width="0.8"/><line x1="179.52" y1="3.10" x2="179.52" y2="217.90" stroke="#1b1b1b" stroke-width="0.8"/><line x1="4.10" y1="178.52" x2="218.90" y2="178.52" stroke="#1b1b1b" stroke-width="0.8"/><line x1="183.10" y1="3.10" x2="183.10" y2="217.90" stroke="#1b1b1b" stroke-width="0.8"/><line x1="4.10" y1="182.10" x2="218.90" y2="182.10" stroke="#1b1b1b" stroke-width="0.8"/><line x1="186.68" y1="3.10" x2="186.68" y2="217.90" stroke="#1b1b1b" stroke-width="0.8"/><line x1="4.10" y1="185.68" x2="218.90" y2="185.68" stroke="#1b1b1b" stroke-width="0.8"/><line x1="190.26" y1="3.10" x2="190.26" y2="217.90" stroke="#1b1b1b" stroke-width="0.8"/><line x1="4.10" y1="189.26" x2="218.90" y2="189.26" stroke="#1b1b1b" stroke-width="0.8"/><line x1="193.84" y1="3.10" x2="193.84" y2="217.90" stroke="#1b1b1b" stroke-width="0.8"/><line x1="4.10" y1="192.84" x2="218.90" y2="192.84" stroke="#1b1b1b" stroke-width="0.8"/><line x1="197.42" y1="3.10" x2="197.42" y2="217.90" stroke="#1b1b1b" stroke-width="0.8"/><line x1="4.10" y1="196.42" x2="218.90" y2="196.42" stroke="#1b1b1b" stroke-width="0.8"/><line x1="201.00" y1="3.10" x2="201.00" y2="217.90" stroke="#1b1b1b" stroke-width="0.8"/><line x1="4.10" y1="200.00" x2="218.90" y2="200.00" stroke="#1b1b1b" stroke-width="0.8"/><line x1="204.58" y1="3.10" x2="204.58" y2="217.90" stroke="#1b1b1b" stroke-width="0.8"/><line x1="4.10" y1="203.58" x2="218.90" y2="203.58" stroke="#1b1b1b" stroke-width="0.8"/><line x1="208.16" y1="3.10" x2="208.16" y2="217.90" stroke="#1b1b1b" stroke-width="0.8"/><line x1="4.10" y1="207.16" x2="218.90" y2="207.16" stroke="#1b1b1b" stroke-width="0.8"/><line x1="211.74" y1="3.10" x2="211.74" y2="217.90" stroke="#1b1b1b" stroke-width="0.8"/><line x1="4.10" y1="210.74" x2="218.90" y2="210.74" stroke="#1b1b1b" stroke-width="0.8"/><line x1="215.32" y1="3.10" x2="215.32" y2="217.90" stroke="#1b1b1b" stroke-width="0.8"/><line x1="4.10" y1="214.32" x2="218.90" y2="214.32" stroke="#1b1b1b" stroke-width="0.8"/><line x1="218.90" y1="3.10" x2="218.90" y2="217.90" stroke="#1b1b1b" stroke-width="0.8"/><line x1="4.10" y1="217.90" x2="218.90" y2="217.90" stroke="#1b1b1b" stroke-width="0.8"/><line x1="4.10" y1="3.10" x2="4.10" y2="217.90" stroke="#363636" stroke-width="0.8"/><line x1="4.10" y1="3.10" x2="218.90" y2="3.10" stroke="#363636" stroke-width="0.8"/><line x1="22.00" y1="3.10" x2="22.00" y2="217.90" stroke="#363636" stroke-width="0.8"/><line x1="4.10" y1="21.00" x2="218.90" y2="21.00" stroke="#363636" stroke-width="0.8"/><line x1="39.90" y1="3.10" x2="39.90" y2="217.90" stroke="#363636" stroke-width="0.8"/><line x1="4.10" y1="38.90" x2="218.90" y2="38.90" stroke="#363636" stroke-width="0.8"/><line x1="57.80" y1="3.10" x2="57.80" y2="217.90" stroke="#363636" stroke-width="0.8"/><line x1="4.10" y1="56.80" x2="218.90" y2="56.80" stroke="#363636" stroke-width="0.8"/><line x1="75.70" y1="3.10" x2="75.70" y2="217.90" stroke="#363636" stroke-width="0.8"/><line x1="4.10" y1="74.70" x2="218.90" y2="74.70" stroke="#363636" stroke-width="0.8"/><line x1="93.60" y1="3.10" x2="93.60" y2="217.90" stroke="#363636" stroke-width="0.8"/><line x1="4.10" y1="92.60" x2="218.90" y2="92.60" stroke="#363636" stroke-width="0.8"/><line x1="111.50" y1="3.10" x2="111.50" y2="217.90" stroke="#363636" stroke-width="0.8"/><line x1="4.10" y1="110.50" x2="218.90" y2="110.50" stroke="#363636" stroke-width="0.8"/><line x1="129.40" y1="3.10" x2="129.40" y2="217.90" stroke="#363636" stroke-width="0.8"/><line x1="4.10" y1="128.40" x2="218.90" y2="128.40" stroke="#363636" stroke-width="0.8"/><line x1="147.30" y1="3.10" x2="147.30" y2="217.90" stroke="#363636" stroke-width="0.8"/><line x1="4.10" y1="146.30" x2="218.90" y2="146.30" stroke="#363636" stroke-width="0.8"/><line x1="165.20" y1="3.10" x2="165.20" y2="217.90" stroke="#363636" stroke-width="0.8"/><line x1="4.10" y1="164.20" x2="218.90" y2="164.20" stroke="#363636" stroke-width="0.8"/><line x1="183.10" y1="3.10" x2="183.10" y2="217.90" stroke="#363636" stroke-width="0.8"/><line x1="4.10" y1="182.10" x2="218.90" y2="182.10" stroke="#363636" stroke-width="0.8"/><line x1="201.00" y1="3.10" x2="201.00" y2="217.90" stroke="#363636" stroke-width="0.8"/><line x1="4.10" y1="200.00" x2="218.90" y2="200.00" stroke="#363636" stroke-width="0.8"/><line x1="218.90" y1="3.10" x2="218.90" y2="217.90" stroke="#363636" stroke-width="0.8"/><line x1="4.10" y1="217.90" x2="218.90" y2="217.90" stroke="#363636" stroke-width="0.8"/><rect x="4.10" y="3.10" width="214.80" height="214.80" fill="none" stroke="#5a5a5a" stroke-width="0.8"/><line x1="4.10" y1="0.10" x2="4.10" y2="3.10" stroke="#9a9a9a" stroke-width="0.6"/><line x1="4.10" y1="217.90" x2="4.10" y2="220.90" stroke="#9a9a9a" stroke-width="0.6"/><line x1="1.10" y1="3.10" x2="4.10" y2="3.10" stroke="#9a9a9a" stroke-width="0.6"/><line x1="218.90" y1="3.10" x2="221.90" y2="3.10" stroke="#9a9a9a" stroke-width="0.6"/><line x1="5.89" y1="1.90" x2="5.89" y2="3.10" stroke="#555" stroke-width="0.6"/><line x1="5.89" y1="217.90" x2="5.89" y2="219.10" stroke="#555" stroke-width="0.6"/><line x1="2.90" y1="4.89" x2="4.10" y2="4.89" stroke="#555" stroke-width="0.6"/><line x1="218.90" y1="4.89" x2="220.10" y2="4.89" stroke="#555" stroke-width="0.6"/><line x1="7.68" y1="1.90" x2="7.68" y2="3.10" stroke="#9a9a9a" stroke-width="0.6"/><line x1="7.68" y1="217.90" x2="7.68" y2="219.10" stroke="#9a9a9a" stroke-width="0.6"/><line x1="2.90" y1="6.68" x2="4.10" y2="6.68" stroke="#9a9a9a" stroke-width="0.6"/><line x1="218.90" y1="6.68" x2="220.10" y2="6.68" stroke="#9a9a9a" stroke-width="0.6"/><line x1="9.47" y1="1.90" x2="9.47" y2="3.10" stroke="#555" stroke-width="0.6"/><line x1="9.47" y1="217.90" x2="9.47" y2="219.10" stroke="#555" stroke-width="0.6"/><line x1="2.90" y1="8.47" x2="4.10" y2="8.47" stroke="#555" stroke-width="0.6"/><line x1="218.90" y1="8.47" x2="220.10" y2="8.47" stroke="#555" stroke-width="0.6"/><line x1="11.26" y1="1.90" x2="11.26" y2="3.10" stroke="#9a9a9a" stroke-width="0.6"/><line x1="11.26" y1="217.90" x2="11.26" y2="219.10" stroke="#9a9a9a" stroke-width="0.6"/><line x1="2.90" y1="10.26" x2="4.10" y2="10.26" stroke="#9a9a9a" stroke-width="0.6"/><line x1="218.90" y1="10.26" x2="220.10" y2="10.26" stroke="#9a9a9a" stroke-width="0.6"/><line x1="13.05" y1="1.90" x2="13.05" y2="3.10" stroke="#555" stroke-width="0.6"/><line x1="13.05" y1="217.90" x2="13.05" y2="219.10" stroke="#555" stroke-width="0.6"/><line x1="2.90" y1="12.05" x2="4.10" y2="12.05" stroke="#555" stroke-width="0.6"/><line x1="218.90" y1="12.05" x2="220.10" y2="12.05" stroke="#555" stroke-width="0.6"/><line x1="14.84" y1="1.90" x2="14.84" y2="3.10" stroke="#9a9a9a" stroke-width="0.6"/><line x1="14.84" y1="217.90" x2="14.84" y2="219.10" stroke="#9a9a9a" stroke-width="0.6"/><line x1="2.90" y1="13.84" x2="4.10" y2="13.84" stroke="#9a9a9a" stroke-width="0.6"/><line x1="218.90" y1="13.84" x2="220.10" y2="13.84" stroke="#9a9a9a" stroke-width="0.6"/><line x1="16.63" y1="1.90" x2="16.63" y2="3.10" stroke="#555" stroke-width="0.6"/><line x1="16.63" y1="217.90" x2="16.63" y2="219.10" stroke="#555" stroke-width="0.6"/><line x1="2.90" y1="15.63" x2="4.10" y2="15.63" stroke="#555" stroke-width="0.6"/><line x1="218.90" y1="15.63" x2="220.10" y2="15.63" stroke="#555" stroke-width="0.6"/><line x1="18.42" y1="1.90" x2="18.42" y2="3.10" stroke="#9a9a9a" stroke-width="0.6"/><line x1="18.42" y1="217.90" x2="18.42" y2="219.10" stroke="#9a9a9a" stroke-width="0.6"/><line x1="2.90" y1="17.42" x2="4.10" y2="17.42" stroke="#9a9a9a" stroke-width="0.6"/><line x1="218.90" y1="17.42" x2="220.10" y2="17.42" stroke="#9a9a9a" stroke-width="0.6"/><line x1="20.21" y1="1.90" x2="20.21" y2="3.10" stroke="#555" stroke-width="0.6"/><line x1="20.21" y1="217.90" x2="20.21" y2="219.10" stroke="#555" stroke-width="0.6"/><line x1="2.90" y1="19.21" x2="4.10" y2="19.21" stroke="#555" stroke-width="0.6"/><line x1="218.90" y1="19.21" x2="220.10" y2="19.21" stroke="#555" stroke-width="0.6"/><line x1="22.00" y1="0.10" x2="22.00" y2="3.10" stroke="#9a9a9a" stroke-width="0.6"/><line x1="22.00" y1="217.90" x2="22.00" y2="220.90" stroke="#9a9a9a" stroke-width="0.6"/><line x1="1.10" y1="21.00" x2="4.10" y2="21.00" stroke="#9a9a9a" stroke-width="0.6"/><line x1="218.90" y1="21.00" x2="221.90" y2="21.00" stroke="#9a9a9a" stroke-width="0.6"/><line x1="23.79" y1="1.90" x2="23.79" y2="3.10" stroke="#555" stroke-width="0.6"/><line x1="23.79" y1="217.90" x2="23.79" y2="219.10" stroke="#555" stroke-width="0.6"/><line x1="2.90" y1="22.79" x2="4.10" y2="22.79" stroke="#555" stroke-width="0.6"/><line x1="218.90" y1="22.79" x2="220.10" y2="22.79" stroke="#555" stroke-width="0.6"/><line x1="25.58" y1="1.90" x2="25.58" y2="3.10" stroke="#9a9a9a" stroke-width="0.6"/><line x1="25.58" y1="217.90" x2="25.58" y2="219.10" stroke="#9a9a9a" stroke-width="0.6"/><line x1="2.90" y1="24.58" x2="4.10" y2="24.58" stroke="#9a9a9a" stroke-width="0.6"/><line x1="218.90" y1="24.58" x2="220.10" y2="24.58" stroke="#9a9a9a" stroke-width="0.6"/><line x1="27.37" y1="1.90" x2="27.37" y2="3.10" stroke="#555" stroke-width="0.6"/><line x1="27.37" y1="217.90" x2="27.37" y2="219.10" stroke="#555" stroke-width="0.6"/><line x1="2.90" y1="26.37" x2="4.10" y2="26.37" stroke="#555" stroke-width="0.6"/><line x1="218.90" y1="26.37" x2="220.10" y2="26.37" stroke="#555" stroke-width="0.6"/><line x1="29.16" y1="1.90" x2="29.16" y2="3.10" stroke="#9a9a9a" stroke-width="0.6"/><line x1="29.16" y1="217.90" x2="29.16" y2="219.10" stroke="#9a9a9a" stroke-width="0.6"/><line x1="2.90" y1="28.16" x2="4.10" y2="28.16" stroke="#9a9a9a" stroke-width="0.6"/><line x1="218.90" y1="28.16" x2="220.10" y2="28.16" stroke="#9a9a9a" stroke-width="0.6"/><line x1="30.95" y1="1.90" x2="30.95" y2="3.10" stroke="#555" stroke-width="0.6"/><line x1="30.95" y1="217.90" x2="30.95" y2="219.10" stroke="#555" stroke-width="0.6"/><line x1="2.90" y1="29.95" x2="4.10" y2="29.95" stroke="#555" stroke-width="0.6"/><line x1="218.90" y1="29.95" x2="220.10" y2="29.95" stroke="#555" stroke-width="0.6"/><line x1="32.74" y1="1.90" x2="32.74" y2="3.10" stroke="#9a9a9a" stroke-width="0.6"/><line x1="32.74" y1="217.90" x2="32.74" y2="219.10" stroke="#9a9a9a" stroke-width="0.6"/><line x1="2.90" y1="31.74" x2="4.10" y2="31.74" stroke="#9a9a9a" stroke-width="0.6"/><line x1="218.90" y1="31.74" x2="220.10" y2="31.74" stroke="#9a9a9a" stroke-width="0.6"/><line x1="34.53" y1="1.90" x2="34.53" y2="3.10" stroke="#555" stroke-width="0.6"/><line x1="34.53" y1="217.90" x2="34.53" y2="219.10" stroke="#555" stroke-width="0.6"/><line x1="2.90" y1="33.53" x2="4.10" y2="33.53" stroke="#555" stroke-width="0.6"/><line x1="218.90" y1="33.53" x2="220.10" y2="33.53" stroke="#555" stroke-width="0.6"/><line x1="36.32" y1="1.90" x2="36.32" y2="3.10" stroke="#9a9a9a" stroke-width="0.6"/><line x1="36.32" y1="217.90" x2="36.32" y2="219.10" stroke="#9a9a9a" stroke-width="0.6"/><line x1="2.90" y1="35.32" x2="4.10" y2="35.32" stroke="#9a9a9a" stroke-width="0.6"/><line x1="218.90" y1="35.32" x2="220.10" y2="35.32" stroke="#9a9a9a" stroke-width="0.6"/><line x1="38.11" y1="1.90" x2="38.11" y2="3.10" stroke="#555" stroke-width="0.6"/><line x1="38.11" y1="217.90" x2="38.11" y2="219.10" stroke="#555" stroke-width="0.6"/><line x1="2.90" y1="37.11" x2="4.10" y2="37.11" stroke="#555" stroke-width="0.6"/><line x1="218.90" y1="37.11" x2="220.10" y2="37.11" stroke="#555" stroke-width="0.6"/><line x1="39.90" y1="0.10" x2="39.90" y2="3.10" stroke="#9a9a9a" stroke-width="0.6"/><line x1="39.90" y1="217.90" x2="39.90" y2="220.90" stroke="#9a9a9a" stroke-width="0.6"/><line x1="1.10" y1="38.90" x2="4.10" y2="38.90" stroke="#9a9a9a" stroke-width="0.6"/><line x1="218.90" y1="38.90" x2="221.90" y2="38.90" stroke="#9a9a9a" stroke-width="0.6"/><line x1="41.69" y1="1.90" x2="41.69" y2="3.10" stroke="#555" stroke-width="0.6"/><line x1="41.69" y1="217.90" x2="41.69" y2="219.10" stroke="#555" stroke-width="0.6"/><line x1="2.90" y1="40.69" x2="4.10" y2="40.69" stroke="#555" stroke-width="0.6"/><line x1="218.90" y1="40.69" x2="220.10" y2="40.69" stroke="#555" stroke-width="0.6"/><line x1="43.48" y1="1.90" x2="43.48" y2="3.10" stroke="#9a9a9a" stroke-width="0.6"/><line x1="43.48" y1="217.90" x2="43.48" y2="219.10" stroke="#9a9a9a" stroke-width="0.6"/><line x1="2.90" y1="42.48" x2="4.10" y2="42.48" stroke="#9a9a9a" stroke-width="0.6"/><line x1="218.90" y1="42.48" x2="220.10" y2="42.48" stroke="#9a9a9a" stroke-width="0.6"/><line x1="45.27" y1="1.90" x2="45.27" y2="3.10" stroke="#555" stroke-width="0.6"/><line x1="45.27" y1="217.90" x2="45.27" y2="219.10" stroke="#555" stroke-width="0.6"/><line x1="2.90" y1="44.27" x2="4.10" y2="44.27" stroke="#555" stroke-width="0.6"/><line x1="218.90" y1="44.27" x2="220.10" y2="44.27" stroke="#555" stroke-width="0.6"/><line x1="47.06" y1="1.90" x2="47.06" y2="3.10" stroke="#9a9a9a" stroke-width="0.6"/><line x1="47.06" y1="217.90" x2="47.06" y2="219.10" stroke="#9a9a9a" stroke-width="0.6"/><line x1="2.90" y1="46.06" x2="4.10" y2="46.06" stroke="#9a9a9a" stroke-width="0.6"/><line x1="218.90" y1="46.06" x2="220.10" y2="46.06" stroke="#9a9a9a" stroke-width="0.6"/><line x1="48.85" y1="1.90" x2="48.85" y2="3.10" stroke="#555" stroke-width="0.6"/><line x1="48.85" y1="217.90" x2="48.85" y2="219.10" stroke="#555" stroke-width="0.6"/><line x1="2.90" y1="47.85" x2="4.10" y2="47.85" stroke="#555" stroke-width="0.6"/><line x1="218.90" y1="47.85" x2="220.10" y2="47.85" stroke="#555" stroke-width="0.6"/><line x1="50.64" y1="1.90" x2="50.64" y2="3.10" stroke="#9a9a9a" stroke-width="0.6"/><line x1="50.64" y1="217.90" x2="50.64" y2="219.10" stroke="#9a9a9a" stroke-width="0.6"/><line x1="2.90" y1="49.64" x2="4.10" y2="49.64" stroke="#9a9a9a" stroke-width="0.6"/><line x1="218.90" y1="49.64" x2="220.10" y2="49.64" stroke="#9a9a9a" stroke-width="0.6"/><line x1="52.43" y1="1.90" x2="52.43" y2="3.10" stroke="#555" stroke-width="0.6"/><line x1="52.43" y1="217.90" x2="52.43" y2="219.10" stroke="#555" stroke-width="0.6"/><line x1="2.90" y1="51.43" x2="4.10" y2="51.43" stroke="#555" stroke-width="0.6"/><line x1="218.90" y1="51.43" x2="220.10" y2="51.43" stroke="#555" stroke-width="0.6"/><line x1="54.22" y1="1.90" x2="54.22" y2="3.10" stroke="#9a9a9a" stroke-width="0.6"/><line x1="54.22" y1="217.90" x2="54.22" y2="219.10" stroke="#9a9a9a" stroke-width="0.6"/><line x1="2.90" y1="53.22" x2="4.10" y2="53.22" stroke="#9a9a9a" stroke-width="0.6"/><line x1="218.90" y1="53.22" x2="220.10" y2="53.22" stroke="#9a9a9a" stroke-width="0.6"/><line x1="56.01" y1="1.90" x2="56.01" y2="3.10" stroke="#555" stroke-width="0.6"/><line x1="56.01" y1="217.90" x2="56.01" y2="219.10" stroke="#555" stroke-width="0.6"/><line x1="2.90" y1="55.01" x2="4.10" y2="55.01" stroke="#555" stroke-width="0.6"/><line x1="218.90" y1="55.01" x2="220.10" y2="55.01" stroke="#555" stroke-width="0.6"/><line x1="57.80" y1="0.10" x2="57.80" y2="3.10" stroke="#9a9a9a" stroke-width="0.6"/><line x1="57.80" y1="217.90" x2="57.80" y2="220.90" stroke="#9a9a9a" stroke-width="0.6"/><line x1="1.10" y1="56.80" x2="4.10" y2="56.80" stroke="#9a9a9a" stroke-width="0.6"/><line x1="218.90" y1="56.80" x2="221.90" y2="56.80" stroke="#9a9a9a" stroke-width="0.6"/><line x1="59.59" y1="1.90" x2="59.59" y2="3.10" stroke="#555" stroke-width="0.6"/><line x1="59.59" y1="217.90" x2="59.59" y2="219.10" stroke="#555" stroke-width="0.6"/><line x1="2.90" y1="58.59" x2="4.10" y2="58.59" stroke="#555" stroke-width="0.6"/><line x1="218.90" y1="58.59" x2="220.10" y2="58.59" stroke="#555" stroke-width="0.6"/><line x1="61.38" y1="1.90" x2="61.38" y2="3.10" stroke="#9a9a9a" stroke-width="0.6"/><line x1="61.38" y1="217.90" x2="61.38" y2="219.10" stroke="#9a9a9a" stroke-width="0.6"/><line x1="2.90" y1="60.38" x2="4.10" y2="60.38" stroke="#9a9a9a" stroke-width="0.6"/><line x1="218.90" y1="60.38" x2="220.10" y2="60.38" stroke="#9a9a9a" stroke-width="0.6"/><line x1="63.17" y1="1.90" x2="63.17" y2="3.10" stroke="#555" stroke-width="0.6"/><line x1="63.17" y1="217.90" x2="63.17" y2="219.10" stroke="#555" stroke-width="0.6"/><line x1="2.90" y1="62.17" x2="4.10" y2="62.17" stroke="#555" stroke-width="0.6"/><line x1="218.90" y1="62.17" x2="220.10" y2="62.17" stroke="#555" stroke-width="0.6"/><line x1="64.96" y1="1.90" x2="64.96" y2="3.10" stroke="#9a9a9a" stroke-width="0.6"/><line x1="64.96" y1="217.90" x2="64.96" y2="219.10" stroke="#9a9a9a" stroke-width="0.6"/><line x1="2.90" y1="63.96" x2="4.10" y2="63.96" stroke="#9a9a9a" stroke-width="0.6"/><line x1="218.90" y1="63.96" x2="220.10" y2="63.96" stroke="#9a9a9a" stroke-width="0.6"/><line x1="66.75" y1="1.90" x2="66.75" y2="3.10" stroke="#555" stroke-width="0.6"/><line x1="66.75" y1="217.90" x2="66.75" y2="219.10" stroke="#555" stroke-width="0.6"/><line x1="2.90" y1="65.75" x2="4.10" y2="65.75" stroke="#555" stroke-width="0.6"/><line x1="218.90" y1="65.75" x2="220.10" y2="65.75" stroke="#555" stroke-width="0.6"/><line x1="68.54" y1="1.90" x2="68.54" y2="3.10" stroke="#9a9a9a" stroke-width="0.6"/><line x1="68.54" y1="217.90" x2="68.54" y2="219.10" stroke="#9a9a9a" stroke-width="0.6"/><line x1="2.90" y1="67.54" x2="4.10" y2="67.54" stroke="#9a9a9a" stroke-width="0.6"/><line x1="218.90" y1="67.54" x2="220.10" y2="67.54" stroke="#9a9a9a" stroke-width="0.6"/><line x1="70.33" y1="1.90" x2="70.33" y2="3.10" stroke="#555" stroke-width="0.6"/><line x1="70.33" y1="217.90" x2="70.33" y2="219.10" stroke="#555" stroke-width="0.6"/><line x1="2.90" y1="69.33" x2="4.10" y2="69.33" stroke="#555" stroke-width="0.6"/><line x1="218.90" y1="69.33" x2="220.10" y2="69.33" stroke="#555" stroke-width="0.6"/><line x1="72.12" y1="1.90" x2="72.12" y2="3.10" stroke="#9a9a9a" stroke-width="0.6"/><line x1="72.12" y1="217.90" x2="72.12" y2="219.10" stroke="#9a9a9a" stroke-width="0.6"/><line x1="2.90" y1="71.12" x2="4.10" y2="71.12" stroke="#9a9a9a" stroke-width="0.6"/><line x1="218.90" y1="71.12" x2="220.10" y2="71.12" stroke="#9a9a9a" stroke-width="0.6"/><line x1="73.91" y1="1.90" x2="73.91" y2="3.10" stroke="#555" stroke-width="0.6"/><line x1="73.91" y1="217.90" x2="73.91" y2="219.10" stroke="#555" stroke-width="0.6"/><line x1="2.90" y1="72.91" x2="4.10" y2="72.91" stroke="#555" stroke-width="0.6"/><line x1="218.90" y1="72.91" x2="220.10" y2="72.91" stroke="#555" stroke-width="0.6"/><line x1="75.70" y1="0.10" x2="75.70" y2="3.10" stroke="#9a9a9a" stroke-width="0.6"/><line x1="75.70" y1="217.90" x2="75.70" y2="220.90" stroke="#9a9a9a" stroke-width="0.6"/><line x1="1.10" y1="74.70" x2="4.10" y2="74.70" stroke="#9a9a9a" stroke-width="0.6"/><line x1="218.90" y1="74.70" x2="221.90" y2="74.70" stroke="#9a9a9a" stroke-width="0.6"/><line x1="77.49" y1="1.90" x2="77.49" y2="3.10" stroke="#555" stroke-width="0.6"/><line x1="77.49" y1="217.90" x2="77.49" y2="219.10" stroke="#555" stroke-width="0.6"/><line x1="2.90" y1="76.49" x2="4.10" y2="76.49" stroke="#555" stroke-width="0.6"/><line x1="218.90" y1="76.49" x2="220.10" y2="76.49" stroke="#555" stroke-width="0.6"/><line x1="79.28" y1="1.90" x2="79.28" y2="3.10" stroke="#9a9a9a" stroke-width="0.6"/><line x1="79.28" y1="217.90" x2="79.28" y2="219.10" stroke="#9a9a9a" stroke-width="0.6"/><line x1="2.90" y1="78.28" x2="4.10" y2="78.28" stroke="#9a9a9a" stroke-width="0.6"/><line x1="218.90" y1="78.28" x2="220.10" y2="78.28" stroke="#9a9a9a" stroke-width="0.6"/><line x1="81.07" y1="1.90" x2="81.07" y2="3.10" stroke="#555" stroke-width="0.6"/><line x1="81.07" y1="217.90" x2="81.07" y2="219.10" stroke="#555" stroke-width="0.6"/><line x1="2.90" y1="80.07" x2="4.10" y2="80.07" stroke="#555" stroke-width="0.6"/><line x1="218.90" y1="80.07" x2="220.10" y2="80.07" stroke="#555" stroke-width="0.6"/><line x1="82.86" y1="1.90" x2="82.86" y2="3.10" stroke="#9a9a9a" stroke-width="0.6"/><line x1="82.86" y1="217.90" x2="82.86" y2="219.10" stroke="#9a9a9a" stroke-width="0.6"/><line x1="2.90" y1="81.86" x2="4.10" y2="81.86" stroke="#9a9a9a" stroke-width="0.6"/><line x1="218.90" y1="81.86" x2="220.10" y2="81.86" stroke="#9a9a9a" stroke-width="0.6"/><line x1="84.65" y1="1.90" x2="84.65" y2="3.10" stroke="#555" stroke-width="0.6"/><line x1="84.65" y1="217.90" x2="84.65" y2="219.10" stroke="#555" stroke-width="0.6"/><line x1="2.90" y1="83.65" x2="4.10" y2="83.65" stroke="#555" stroke-width="0.6"/><line x1="218.90" y1="83.65" x2="220.10" y2="83.65" stroke="#555" stroke-width="0.6"/><line x1="86.44" y1="1.90" x2="86.44" y2="3.10" stroke="#9a9a9a" stroke-width="0.6"/><line x1="86.44" y1="217.90" x2="86.44" y2="219.10" stroke="#9a9a9a" stroke-width="0.6"/><line x1="2.90" y1="85.44" x2="4.10" y2="85.44" stroke="#9a9a9a" stroke-width="0.6"/><line x1="218.90" y1="85.44" x2="220.10" y2="85.44" stroke="#9a9a9a" stroke-width="0.6"/><line x1="88.23" y1="1.90" x2="88.23" y2="3.10" stroke="#555" stroke-width="0.6"/><line x1="88.23" y1="217.90" x2="88.23" y2="219.10" stroke="#555" stroke-width="0.6"/><line x1="2.90" y1="87.23" x2="4.10" y2="87.23" stroke="#555" stroke-width="0.6"/><line x1="218.90" y1="87.23" x2="220.10" y2="87.23" stroke="#555" stroke-width="0.6"/><line x1="90.02" y1="1.90" x2="90.02" y2="3.10" stroke="#9a9a9a" stroke-width="0.6"/><line x1="90.02" y1="217.90" x2="90.02" y2="219.10" stroke="#9a9a9a" stroke-width="0.6"/><line x1="2.90" y1="89.02" x2="4.10" y2="89.02" stroke="#9a9a9a" stroke-width="0.6"/><line x1="218.90" y1="89.02" x2="220.10" y2="89.02" stroke="#9a9a9a" stroke-width="0.6"/><line x1="91.81" y1="1.90" x2="91.81" y2="3.10" stroke="#555" stroke-width="0.6"/><line x1="91.81" y1="217.90" x2="91.81" y2="219.10" stroke="#555" stroke-width="0.6"/><line x1="2.90" y1="90.81" x2="4.10" y2="90.81" stroke="#555" stroke-width="0.6"/><line x1="218.90" y1="90.81" x2="220.10" y2="90.81" stroke="#555" stroke-width="0.6"/><line x1="93.60" y1="0.10" x2="93.60" y2="3.10" stroke="#9a9a9a" stroke-width="0.6"/><line x1="93.60" y1="217.90" x2="93.60" y2="220.90" stroke="#9a9a9a" stroke-width="0.6"/><line x1="1.10" y1="92.60" x2="4.10" y2="92.60" stroke="#9a9a9a" stroke-width="0.6"/><line x1="218.90" y1="92.60" x2="221.90" y2="92.60" stroke="#9a9a9a" stroke-width="0.6"/><line x1="95.39" y1="1.90" x2="95.39" y2="3.10" stroke="#555" stroke-width="0.6"/><line x1="95.39" y1="217.90" x2="95.39" y2="219.10" stroke="#555" stroke-width="0.6"/><line x1="2.90" y1="94.39" x2="4.10" y2="94.39" stroke="#555" stroke-width="0.6"/><line x1="218.90" y1="94.39" x2="220.10" y2="94.39" stroke="#555" stroke-width="0.6"/><line x1="97.18" y1="1.90" x2="97.18" y2="3.10" stroke="#9a9a9a" stroke-width="0.6"/><line x1="97.18" y1="217.90" x2="97.18" y2="219.10" stroke="#9a9a9a" stroke-width="0.6"/><line x1="2.90" y1="96.18" x2="4.10" y2="96.18" stroke="#9a9a9a" stroke-width="0.6"/><line x1="218.90" y1="96.18" x2="220.10" y2="96.18" stroke="#9a9a9a" stroke-width="0.6"/><line x1="98.97" y1="1.90" x2="98.97" y2="3.10" stroke="#555" stroke-width="0.6"/><line x1="98.97" y1="217.90" x2="98.97" y2="219.10" stroke="#555" stroke-width="0.6"/><line x1="2.90" y1="97.97" x2="4.10" y2="97.97" stroke="#555" stroke-width="0.6"/><line x1="218.90" y1="97.97" x2="220.10" y2="97.97" stroke="#555" stroke-width="0.6"/><line x1="100.76" y1="1.90" x2="100.76" y2="3.10" stroke="#9a9a9a" stroke-width="0.6"/><line x1="100.76" y1="217.90" x2="100.76" y2="219.10" stroke="#9a9a9a" stroke-width="0.6"/><line x1="2.90" y1="99.76" x2="4.10" y2="99.76" stroke="#9a9a9a" stroke-width="0.6"/><line x1="218.90" y1="99.76" x2="220.10" y2="99.76" stroke="#9a9a9a" stroke-width="0.6"/><line x1="102.55" y1="1.90" x2="102.55" y2="3.10" stroke="#555" stroke-width="0.6"/><line x1="102.55" y1="217.90" x2="102.55" y2="219.10" stroke="#555" stroke-width="0.6"/><line x1="2.90" y1="101.55" x2="4.10" y2="101.55" stroke="#555" stroke-width="0.6"/><line x1="218.90" y1="101.55" x2="220.10" y2="101.55" stroke="#555" stroke-width="0.6"/><line x1="104.34" y1="1.90" x2="104.34" y2="3.10" stroke="#9a9a9a" stroke-width="0.6"/><line x1="104.34" y1="217.90" x2="104.34" y2="219.10" stroke="#9a9a9a" stroke-width="0.6"/><line x1="2.90" y1="103.34" x2="4.10" y2="103.34" stroke="#9a9a9a" stroke-width="0.6"/><line x1="218.90" y1="103.34" x2="220.10" y2="103.34" stroke="#9a9a9a" stroke-width="0.6"/><line x1="106.13" y1="1.90" x2="106.13" y2="3.10" stroke="#555" stroke-width="0.6"/><line x1="106.13" y1="217.90" x2="106.13" y2="219.10" stroke="#555" stroke-width="0.6"/><line x1="2.90" y1="105.13" x2="4.10" y2="105.13" stroke="#555" stroke-width="0.6"/><line x1="218.90" y1="105.13" x2="220.10" y2="105.13" stroke="#555" stroke-width="0.6"/><line x1="107.92" y1="1.90" x2="107.92" y2="3.10" stroke="#9a9a9a" stroke-width="0.6"/><line x1="107.92" y1="217.90" x2="107.92" y2="219.10" stroke="#9a9a9a" stroke-width="0.6"/><line x1="2.90" y1="106.92" x2="4.10" y2="106.92" stroke="#9a9a9a" stroke-width="0.6"/><line x1="218.90" y1="106.92" x2="220.10" y2="106.92" stroke="#9a9a9a" stroke-width="0.6"/><line x1="109.71" y1="1.90" x2="109.71" y2="3.10" stroke="#555" stroke-width="0.6"/><line x1="109.71" y1="217.90" x2="109.71" y2="219.10" stroke="#555" stroke-width="0.6"/><line x1="2.90" y1="108.71" x2="4.10" y2="108.71" stroke="#555" stroke-width="0.6"/><line x1="218.90" y1="108.71" x2="220.10" y2="108.71" stroke="#555" stroke-width="0.6"/><line x1="111.50" y1="0.10" x2="111.50" y2="3.10" stroke="#9a9a9a" stroke-width="0.6"/><line x1="111.50" y1="217.90" x2="111.50" y2="220.90" stroke="#9a9a9a" stroke-width="0.6"/><line x1="1.10" y1="110.50" x2="4.10" y2="110.50" stroke="#9a9a9a" stroke-width="0.6"/><line x1="218.90" y1="110.50" x2="221.90" y2="110.50" stroke="#9a9a9a" stroke-width="0.6"/><line x1="113.29" y1="1.90" x2="113.29" y2="3.10" stroke="#555" stroke-width="0.6"/><line x1="113.29" y1="217.90" x2="113.29" y2="219.10" stroke="#555" stroke-width="0.6"/><line x1="2.90" y1="112.29" x2="4.10" y2="112.29" stroke="#555" stroke-width="0.6"/><line x1="218.90" y1="112.29" x2="220.10" y2="112.29" stroke="#555" stroke-width="0.6"/><line x1="115.08" y1="1.90" x2="115.08" y2="3.10" stroke="#9a9a9a" stroke-width="0.6"/><line x1="115.08" y1="217.90" x2="115.08" y2="219.10" stroke="#9a9a9a" stroke-width="0.6"/><line x1="2.90" y1="114.08" x2="4.10" y2="114.08" stroke="#9a9a9a" stroke-width="0.6"/><line x1="218.90" y1="114.08" x2="220.10" y2="114.08" stroke="#9a9a9a" stroke-width="0.6"/><line x1="116.87" y1="1.90" x2="116.87" y2="3.10" stroke="#555" stroke-width="0.6"/><line x1="116.87" y1="217.90" x2="116.87" y2="219.10" stroke="#555" stroke-width="0.6"/><line x1="2.90" y1="115.87" x2="4.10" y2="115.87" stroke="#555" stroke-width="0.6"/><line x1="218.90" y1="115.87" x2="220.10" y2="115.87" stroke="#555" stroke-width="0.6"/><line x1="118.66" y1="1.90" x2="118.66" y2="3.10" stroke="#9a9a9a" stroke-width="0.6"/><line x1="118.66" y1="217.90" x2="118.66" y2="219.10" stroke="#9a9a9a" stroke-width="0.6"/><line x1="2.90" y1="117.66" x2="4.10" y2="117.66" stroke="#9a9a9a" stroke-width="0.6"/><line x1="218.90" y1="117.66" x2="220.10" y2="117.66" stroke="#9a9a9a" stroke-width="0.6"/><line x1="120.45" y1="1.90" x2="120.45" y2="3.10" stroke="#555" stroke-width="0.6"/><line x1="120.45" y1="217.90" x2="120.45" y2="219.10" stroke="#555" stroke-width="0.6"/><line x1="2.90" y1="119.45" x2="4.10" y2="119.45" stroke="#555" stroke-width="0.6"/><line x1="218.90" y1="119.45" x2="220.10" y2="119.45" stroke="#555" stroke-width="0.6"/><line x1="122.24" y1="1.90" x2="122.24" y2="3.10" stroke="#9a9a9a" stroke-width="0.6"/><line x1="122.24" y1="217.90" x2="122.24" y2="219.10" stroke="#9a9a9a" stroke-width="0.6"/><line x1="2.90" y1="121.24" x2="4.10" y2="121.24" stroke="#9a9a9a" stroke-width="0.6"/><line x1="218.90" y1="121.24" x2="220.10" y2="121.24" stroke="#9a9a9a" stroke-width="0.6"/><line x1="124.03" y1="1.90" x2="124.03" y2="3.10" stroke="#555" stroke-width="0.6"/><line x1="124.03" y1="217.90" x2="124.03" y2="219.10" stroke="#555" stroke-width="0.6"/><line x1="2.90" y1="123.03" x2="4.10" y2="123.03" stroke="#555" stroke-width="0.6"/><line x1="218.90" y1="123.03" x2="220.10" y2="123.03" stroke="#555" stroke-width="0.6"/><line x1="125.82" y1="1.90" x2="125.82" y2="3.10" stroke="#9a9a9a" stroke-width="0.6"/><line x1="125.82" y1="217.90" x2="125.82" y2="219.10" stroke="#9a9a9a" stroke-width="0.6"/><line x1="2.90" y1="124.82" x2="4.10" y2="124.82" stroke="#9a9a9a" stroke-width="0.6"/><line x1="218.90" y1="124.82" x2="220.10" y2="124.82" stroke="#9a9a9a" stroke-width="0.6"/><line x1="127.61" y1="1.90" x2="127.61" y2="3.10" stroke="#555" stroke-width="0.6"/><line x1="127.61" y1="217.90" x2="127.61" y2="219.10" stroke="#555" stroke-width="0.6"/><line x1="2.90" y1="126.61" x2="4.10" y2="126.61" stroke="#555" stroke-width="0.6"/><line x1="218.90" y1="126.61" x2="220.10" y2="126.61" stroke="#555" stroke-width="0.6"/><line x1="129.40" y1="0.10" x2="129.40" y2="3.10" stroke="#9a9a9a" stroke-width="0.6"/><line x1="129.40" y1="217.90" x2="129.40" y2="220.90" stroke="#9a9a9a" stroke-width="0.6"/><line x1="1.10" y1="128.40" x2="4.10" y2="128.40" stroke="#9a9a9a" stroke-width="0.6"/><line x1="218.90" y1="128.40" x2="221.90" y2="128.40" stroke="#9a9a9a" stroke-width="0.6"/><line x1="131.19" y1="1.90" x2="131.19" y2="3.10" stroke="#555" stroke-width="0.6"/><line x1="131.19" y1="217.90" x2="131.19" y2="219.10" stroke="#555" stroke-width="0.6"/><line x1="2.90" y1="130.19" x2="4.10" y2="130.19" stroke="#555" stroke-width="0.6"/><line x1="218.90" y1="130.19" x2="220.10" y2="130.19" stroke="#555" stroke-width="0.6"/><line x1="132.98" y1="1.90" x2="132.98" y2="3.10" stroke="#9a9a9a" stroke-width="0.6"/><line x1="132.98" y1="217.90" x2="132.98" y2="219.10" stroke="#9a9a9a" stroke-width="0.6"/><line x1="2.90" y1="131.98" x2="4.10" y2="131.98" stroke="#9a9a9a" stroke-width="0.6"/><line x1="218.90" y1="131.98" x2="220.10" y2="131.98" stroke="#9a9a9a" stroke-width="0.6"/><line x1="134.77" y1="1.90" x2="134.77" y2="3.10" stroke="#555" stroke-width="0.6"/><line x1="134.77" y1="217.90" x2="134.77" y2="219.10" stroke="#555" stroke-width="0.6"/><line x1="2.90" y1="133.77" x2="4.10" y2="133.77" stroke="#555" stroke-width="0.6"/><line x1="218.90" y1="133.77" x2="220.10" y2="133.77" stroke="#555" stroke-width="0.6"/><line x1="136.56" y1="1.90" x2="136.56" y2="3.10" stroke="#9a9a9a" stroke-width="0.6"/><line x1="136.56" y1="217.90" x2="136.56" y2="219.10" stroke="#9a9a9a" stroke-width="0.6"/><line x1="2.90" y1="135.56" x2="4.10" y2="135.56" stroke="#9a9a9a" stroke-width="0.6"/><line x1="218.90" y1="135.56" x2="220.10" y2="135.56" stroke="#9a9a9a" stroke-width="0.6"/><line x1="138.35" y1="1.90" x2="138.35" y2="3.10" stroke="#555" stroke-width="0.6"/><line x1="138.35" y1="217.90" x2="138.35" y2="219.10" stroke="#555" stroke-width="0.6"/><line x1="2.90" y1="137.35" x2="4.10" y2="137.35" stroke="#555" stroke-width="0.6"/><line x1="218.90" y1="137.35" x2="220.10" y2="137.35" stroke="#555" stroke-width="0.6"/><line x1="140.14" y1="1.90" x2="140.14" y2="3.10" stroke="#9a9a9a" stroke-width="0.6"/><line x1="140.14" y1="217.90" x2="140.14" y2="219.10" stroke="#9a9a9a" stroke-width="0.6"/><line x1="2.90" y1="139.14" x2="4.10" y2="139.14" stroke="#9a9a9a" stroke-width="0.6"/><line x1="218.90" y1="139.14" x2="220.10" y2="139.14" stroke="#9a9a9a" stroke-width="0.6"/><line x1="141.93" y1="1.90" x2="141.93" y2="3.10" stroke="#555" stroke-width="0.6"/><line x1="141.93" y1="217.90" x2="141.93" y2="219.10" stroke="#555" stroke-width="0.6"/><line x1="2.90" y1="140.93" x2="4.10" y2="140.93" stroke="#555" stroke-width="0.6"/><line x1="218.90" y1="140.93" x2="220.10" y2="140.93" stroke="#555" stroke-width="0.6"/><line x1="143.72" y1="1.90" x2="143.72" y2="3.10" stroke="#9a9a9a" stroke-width="0.6"/><line x1="143.72" y1="217.90" x2="143.72" y2="219.10" stroke="#9a9a9a" stroke-width="0.6"/><line x1="2.90" y1="142.72" x2="4.10" y2="142.72" stroke="#9a9a9a" stroke-width="0.6"/><line x1="218.90" y1="142.72" x2="220.10" y2="142.72" stroke="#9a9a9a" stroke-width="0.6"/><line x1="145.51" y1="1.90" x2="145.51" y2="3.10" stroke="#555" stroke-width="0.6"/><line x1="145.51" y1="217.90" x2="145.51" y2="219.10" stroke="#555" stroke-width="0.6"/><line x1="2.90" y1="144.51" x2="4.10" y2="144.51" stroke="#555" stroke-width="0.6"/><line x1="218.90" y1="144.51" x2="220.10" y2="144.51" stroke="#555" stroke-width="0.6"/><line x1="147.30" y1="0.10" x2="147.30" y2="3.10" stroke="#9a9a9a" stroke-width="0.6"/><line x1="147.30" y1="217.90" x2="147.30" y2="220.90" stroke="#9a9a9a" stroke-width="0.6"/><line x1="1.10" y1="146.30" x2="4.10" y2="146.30" stroke="#9a9a9a" stroke-width="0.6"/><line x1="218.90" y1="146.30" x2="221.90" y2="146.30" stroke="#9a9a9a" stroke-width="0.6"/><line x1="149.09" y1="1.90" x2="149.09" y2="3.10" stroke="#555" stroke-width="0.6"/><line x1="149.09" y1="217.90" x2="149.09" y2="219.10" stroke="#555" stroke-width="0.6"/><line x1="2.90" y1="148.09" x2="4.10" y2="148.09" stroke="#555" stroke-width="0.6"/><line x1="218.90" y1="148.09" x2="220.10" y2="148.09" stroke="#555" stroke-width="0.6"/><line x1="150.88" y1="1.90" x2="150.88" y2="3.10" stroke="#9a9a9a" stroke-width="0.6"/><line x1="150.88" y1="217.90" x2="150.88" y2="219.10" stroke="#9a9a9a" stroke-width="0.6"/><line x1="2.90" y1="149.88" x2="4.10" y2="149.88" stroke="#9a9a9a" stroke-width="0.6"/><line x1="218.90" y1="149.88" x2="220.10" y2="149.88" stroke="#9a9a9a" stroke-width="0.6"/><line x1="152.67" y1="1.90" x2="152.67" y2="3.10" stroke="#555" stroke-width="0.6"/><line x1="152.67" y1="217.90" x2="152.67" y2="219.10" stroke="#555" stroke-width="0.6"/><line x1="2.90" y1="151.67" x2="4.10" y2="151.67" stroke="#555" stroke-width="0.6"/><line x1="218.90" y1="151.67" x2="220.10" y2="151.67" stroke="#555" stroke-width="0.6"/><line x1="154.46" y1="1.90" x2="154.46" y2="3.10" stroke="#9a9a9a" stroke-width="0.6"/><line x1="154.46" y1="217.90" x2="154.46" y2="219.10" stroke="#9a9a9a" stroke-width="0.6"/><line x1="2.90" y1="153.46" x2="4.10" y2="153.46" stroke="#9a9a9a" stroke-width="0.6"/><line x1="218.90" y1="153.46" x2="220.10" y2="153.46" stroke="#9a9a9a" stroke-width="0.6"/><line x1="156.25" y1="1.90" x2="156.25" y2="3.10" stroke="#555" stroke-width="0.6"/><line x1="156.25" y1="217.90" x2="156.25" y2="219.10" stroke="#555" stroke-width="0.6"/><line x1="2.90" y1="155.25" x2="4.10" y2="155.25" stroke="#555" stroke-width="0.6"/><line x1="218.90" y1="155.25" x2="220.10" y2="155.25" stroke="#555" stroke-width="0.6"/><line x1="158.04" y1="1.90" x2="158.04" y2="3.10" stroke="#9a9a9a" stroke-width="0.6"/><line x1="158.04" y1="217.90" x2="158.04" y2="219.10" stroke="#9a9a9a" stroke-width="0.6"/><line x1="2.90" y1="157.04" x2="4.10" y2="157.04" stroke="#9a9a9a" stroke-width="0.6"/><line x1="218.90" y1="157.04" x2="220.10" y2="157.04" stroke="#9a9a9a" stroke-width="0.6"/><line x1="159.83" y1="1.90" x2="159.83" y2="3.10" stroke="#555" stroke-width="0.6"/><line x1="159.83" y1="217.90" x2="159.83" y2="219.10" stroke="#555" stroke-width="0.6"/><line x1="2.90" y1="158.83" x2="4.10" y2="158.83" stroke="#555" stroke-width="0.6"/><line x1="218.90" y1="158.83" x2="220.10" y2="158.83" stroke="#555" stroke-width="0.6"/><line x1="161.62" y1="1.90" x2="161.62" y2="3.10" stroke="#9a9a9a" stroke-width="0.6"/><line x1="161.62" y1="217.90" x2="161.62" y2="219.10" stroke="#9a9a9a" stroke-width="0.6"/><line x1="2.90" y1="160.62" x2="4.10" y2="160.62" stroke="#9a9a9a" stroke-width="0.6"/><line x1="218.90" y1="160.62" x2="220.10" y2="160.62" stroke="#9a9a9a" stroke-width="0.6"/><line x1="163.41" y1="1.90" x2="163.41" y2="3.10" stroke="#555" stroke-width="0.6"/><line x1="163.41" y1="217.90" x2="163.41" y2="219.10" stroke="#555" stroke-width="0.6"/><line x1="2.90" y1="162.41" x2="4.10" y2="162.41" stroke="#555" stroke-width="0.6"/><line x1="218.90" y1="162.41" x2="220.10" y2="162.41" stroke="#555" stroke-width="0.6"/><line x1="165.20" y1="0.10" x2="165.20" y2="3.10" stroke="#9a9a9a" stroke-width="0.6"/><line x1="165.20" y1="217.90" x2="165.20" y2="220.90" stroke="#9a9a9a" stroke-width="0.6"/><line x1="1.10" y1="164.20" x2="4.10" y2="164.20" stroke="#9a9a9a" stroke-width="0.6"/><line x1="218.90" y1="164.20" x2="221.90" y2="164.20" stroke="#9a9a9a" stroke-width="0.6"/><line x1="166.99" y1="1.90" x2="166.99" y2="3.10" stroke="#555" stroke-width="0.6"/><line x1="166.99" y1="217.90" x2="166.99" y2="219.10" stroke="#555" stroke-width="0.6"/><line x1="2.90" y1="165.99" x2="4.10" y2="165.99" stroke="#555" stroke-width="0.6"/><line x1="218.90" y1="165.99" x2="220.10" y2="165.99" stroke="#555" stroke-width="0.6"/><line x1="168.78" y1="1.90" x2="168.78" y2="3.10" stroke="#9a9a9a" stroke-width="0.6"/><line x1="168.78" y1="217.90" x2="168.78" y2="219.10" stroke="#9a9a9a" stroke-width="0.6"/><line x1="2.90" y1="167.78" x2="4.10" y2="167.78" stroke="#9a9a9a" stroke-width="0.6"/><line x1="218.90" y1="167.78" x2="220.10" y2="167.78" stroke="#9a9a9a" stroke-width="0.6"/><line x1="170.57" y1="1.90" x2="170.57" y2="3.10" stroke="#555" stroke-width="0.6"/><line x1="170.57" y1="217.90" x2="170.57" y2="219.10" stroke="#555" stroke-width="0.6"/><line x1="2.90" y1="169.57" x2="4.10" y2="169.57" stroke="#555" stroke-width="0.6"/><line x1="218.90" y1="169.57" x2="220.10" y2="169.57" stroke="#555" stroke-width="0.6"/><line x1="172.36" y1="1.90" x2="172.36" y2="3.10" stroke="#9a9a9a" stroke-width="0.6"/><line x1="172.36" y1="217.90" x2="172.36" y2="219.10" stroke="#9a9a9a" stroke-width="0.6"/><line x1="2.90" y1="171.36" x2="4.10" y2="171.36" stroke="#9a9a9a" stroke-width="0.6"/><line x1="218.90" y1="171.36" x2="220.10" y2="171.36" stroke="#9a9a9a" stroke-width="0.6"/><line x1="174.15" y1="1.90" x2="174.15" y2="3.10" stroke="#555" stroke-width="0.6"/><line x1="174.15" y1="217.90" x2="174.15" y2="219.10" stroke="#555" stroke-width="0.6"/><line x1="2.90" y1="173.15" x2="4.10" y2="173.15" stroke="#555" stroke-width="0.6"/><line x1="218.90" y1="173.15" x2="220.10" y2="173.15" stroke="#555" stroke-width="0.6"/><line x1="175.94" y1="1.90" x2="175.94" y2="3.10" stroke="#9a9a9a" stroke-width="0.6"/><line x1="175.94" y1="217.90" x2="175.94" y2="219.10" stroke="#9a9a9a" stroke-width="0.6"/><line x1="2.90" y1="174.94" x2="4.10" y2="174.94" stroke="#9a9a9a" stroke-width="0.6"/><line x1="218.90" y1="174.94" x2="220.10" y2="174.94" stroke="#9a9a9a" stroke-width="0.6"/><line x1="177.73" y1="1.90" x2="177.73" y2="3.10" stroke="#555" stroke-width="0.6"/><line x1="177.73" y1="217.90" x2="177.73" y2="219.10" stroke="#555" stroke-width="0.6"/><line x1="2.90" y1="176.73" x2="4.10" y2="176.73" stroke="#555" stroke-width="0.6"/><line x1="218.90" y1="176.73" x2="220.10" y2="176.73" stroke="#555" stroke-width="0.6"/><line x1="179.52" y1="1.90" x2="179.52" y2="3.10" stroke="#9a9a9a" stroke-width="0.6"/><line x1="179.52" y1="217.90" x2="179.52" y2="219.10" stroke="#9a9a9a" stroke-width="0.6"/><line x1="2.90" y1="178.52" x2="4.10" y2="178.52" stroke="#9a9a9a" stroke-width="0.6"/><line x1="218.90" y1="178.52" x2="220.10" y2="178.52" stroke="#9a9a9a" stroke-width="0.6"/><line x1="181.31" y1="1.90" x2="181.31" y2="3.10" stroke="#555" stroke-width="0.6"/><line x1="181.31" y1="217.90" x2="181.31" y2="219.10" stroke="#555" stroke-width="0.6"/><line x1="2.90" y1="180.31" x2="4.10" y2="180.31" stroke="#555" stroke-width="0.6"/><line x1="218.90" y1="180.31" x2="220.10" y2="180.31" stroke="#555" stroke-width="0.6"/><line x1="183.10" y1="0.10" x2="183.10" y2="3.10" stroke="#9a9a9a" stroke-width="0.6"/><line x1="183.10" y1="217.90" x2="183.10" y2="220.90" stroke="#9a9a9a" stroke-width="0.6"/><line x1="1.10" y1="182.10" x2="4.10" y2="182.10" stroke="#9a9a9a" stroke-width="0.6"/><line x1="218.90" y1="182.10" x2="221.90" y2="182.10" stroke="#9a9a9a" stroke-width="0.6"/><line x1="184.89" y1="1.90" x2="184.89" y2="3.10" stroke="#555" stroke-width="0.6"/><line x1="184.89" y1="217.90" x2="184.89" y2="219.10" stroke="#555" stroke-width="0.6"/><line x1="2.90" y1="183.89" x2="4.10" y2="183.89" stroke="#555" stroke-width="0.6"/><line x1="218.90" y1="183.89" x2="220.10" y2="183.89" stroke="#555" stroke-width="0.6"/><line x1="186.68" y1="1.90" x2="186.68" y2="3.10" stroke="#9a9a9a" stroke-width="0.6"/><line x1="186.68" y1="217.90" x2="186.68" y2="219.10" stroke="#9a9a9a" stroke-width="0.6"/><line x1="2.90" y1="185.68" x2="4.10" y2="185.68" stroke="#9a9a9a" stroke-width="0.6"/><line x1="218.90" y1="185.68" x2="220.10" y2="185.68" stroke="#9a9a9a" stroke-width="0.6"/><line x1="188.47" y1="1.90" x2="188.47" y2="3.10" stroke="#555" stroke-width="0.6"/><line x1="188.47" y1="217.90" x2="188.47" y2="219.10" stroke="#555" stroke-width="0.6"/><line x1="2.90" y1="187.47" x2="4.10" y2="187.47" stroke="#555" stroke-width="0.6"/><line x1="218.90" y1="187.47" x2="220.10" y2="187.47" stroke="#555" stroke-width="0.6"/><line x1="190.26" y1="1.90" x2="190.26" y2="3.10" stroke="#9a9a9a" stroke-width="0.6"/><line x1="190.26" y1="217.90" x2="190.26" y2="219.10" stroke="#9a9a9a" stroke-width="0.6"/><line x1="2.90" y1="189.26" x2="4.10" y2="189.26" stroke="#9a9a9a" stroke-width="0.6"/><line x1="218.90" y1="189.26" x2="220.10" y2="189.26" stroke="#9a9a9a" stroke-width="0.6"/><line x1="192.05" y1="1.90" x2="192.05" y2="3.10" stroke="#555" stroke-width="0.6"/><line x1="192.05" y1="217.90" x2="192.05" y2="219.10" stroke="#555" stroke-width="0.6"/><line x1="2.90" y1="191.05" x2="4.10" y2="191.05" stroke="#555" stroke-width="0.6"/><line x1="218.90" y1="191.05" x2="220.10" y2="191.05" stroke="#555" stroke-width="0.6"/><line x1="193.84" y1="1.90" x2="193.84" y2="3.10" stroke="#9a9a9a" stroke-width="0.6"/><line x1="193.84" y1="217.90" x2="193.84" y2="219.10" stroke="#9a9a9a" stroke-width="0.6"/><line x1="2.90" y1="192.84" x2="4.10" y2="192.84" stroke="#9a9a9a" stroke-width="0.6"/><line x1="218.90" y1="192.84" x2="220.10" y2="192.84" stroke="#9a9a9a" stroke-width="0.6"/><line x1="195.63" y1="1.90" x2="195.63" y2="3.10" stroke="#555" stroke-width="0.6"/><line x1="195.63" y1="217.90" x2="195.63" y2="219.10" stroke="#555" stroke-width="0.6"/><line x1="2.90" y1="194.63" x2="4.10" y2="194.63" stroke="#555" stroke-width="0.6"/><line x1="218.90" y1="194.63" x2="220.10" y2="194.63" stroke="#555" stroke-width="0.6"/><line x1="197.42" y1="1.90" x2="197.42" y2="3.10" stroke="#9a9a9a" stroke-width="0.6"/><line x1="197.42" y1="217.90" x2="197.42" y2="219.10" stroke="#9a9a9a" stroke-width="0.6"/><line x1="2.90" y1="196.42" x2="4.10" y2="196.42" stroke="#9a9a9a" stroke-width="0.6"/><line x1="218.90" y1="196.42" x2="220.10" y2="196.42" stroke="#9a9a9a" stroke-width="0.6"/><line x1="199.21" y1="1.90" x2="199.21" y2="3.10" stroke="#555" stroke-width="0.6"/><line x1="199.21" y1="217.90" x2="199.21" y2="219.10" stroke="#555" stroke-width="0.6"/><line x1="2.90" y1="198.21" x2="4.10" y2="198.21" stroke="#555" stroke-width="0.6"/><line x1="218.90" y1="198.21" x2="220.10" y2="198.21" stroke="#555" stroke-width="0.6"/><line x1="201.00" y1="0.10" x2="201.00" y2="3.10" stroke="#9a9a9a" stroke-width="0.6"/><line x1="201.00" y1="217.90" x2="201.00" y2="220.90" stroke="#9a9a9a" stroke-width="0.6"/><line x1="1.10" y1="200.00" x2="4.10" y2="200.00" stroke="#9a9a9a" stroke-width="0.6"/><line x1="218.90" y1="200.00" x2="221.90" y2="200.00" stroke="#9a9a9a" stroke-width="0.6"/><line x1="202.79" y1="1.90" x2="202.79" y2="3.10" stroke="#555" stroke-width="0.6"/><line x1="202.79" y1="217.90" x2="202.79" y2="219.10" stroke="#555" stroke-width="0.6"/><line x1="2.90" y1="201.79" x2="4.10" y2="201.79" stroke="#555" stroke-width="0.6"/><line x1="218.90" y1="201.79" x2="220.10" y2="201.79" stroke="#555" stroke-width="0.6"/><line x1="204.58" y1="1.90" x2="204.58" y2="3.10" stroke="#9a9a9a" stroke-width="0.6"/><line x1="204.58" y1="217.90" x2="204.58" y2="219.10" stroke="#9a9a9a" stroke-width="0.6"/><line x1="2.90" y1="203.58" x2="4.10" y2="203.58" stroke="#9a9a9a" stroke-width="0.6"/><line x1="218.90" y1="203.58" x2="220.10" y2="203.58" stroke="#9a9a9a" stroke-width="0.6"/><line x1="206.37" y1="1.90" x2="206.37" y2="3.10" stroke="#555" stroke-width="0.6"/><line x1="206.37" y1="217.90" x2="206.37" y2="219.10" stroke="#555" stroke-width="0.6"/><line x1="2.90" y1="205.37" x2="4.10" y2="205.37" stroke="#555" stroke-width="0.6"/><line x1="218.90" y1="205.37" x2="220.10" y2="205.37" stroke="#555" stroke-width="0.6"/><line x1="208.16" y1="1.90" x2="208.16" y2="3.10" stroke="#9a9a9a" stroke-width="0.6"/><line x1="208.16" y1="217.90" x2="208.16" y2="219.10" stroke="#9a9a9a" stroke-width="0.6"/><line x1="2.90" y1="207.16" x2="4.10" y2="207.16" stroke="#9a9a9a" stroke-width="0.6"/><line x1="218.90" y1="207.16" x2="220.10" y2="207.16" stroke="#9a9a9a" stroke-width="0.6"/><line x1="209.95" y1="1.90" x2="209.95" y2="3.10" stroke="#555" stroke-width="0.6"/><line x1="209.95" y1="217.90" x2="209.95" y2="219.10" stroke="#555" stroke-width="0.6"/><line x1="2.90" y1="208.95" x2="4.10" y2="208.95" stroke="#555" stroke-width="0.6"/><line x1="218.90" y1="208.95" x2="220.10" y2="208.95" stroke="#555" stroke-width="0.6"/><line x1="211.74" y1="1.90" x2="211.74" y2="3.10" stroke="#9a9a9a" stroke-width="0.6"/><line x1="211.74" y1="217.90" x2="211.74" y2="219.10" stroke="#9a9a9a" stroke-width="0.6"/><line x1="2.90" y1="210.74" x2="4.10" y2="210.74" stroke="#9a9a9a" stroke-width="0.6"/><line x1="218.90" y1="210.74" x2="220.10" y2="210.74" stroke="#9a9a9a" stroke-width="0.6"/><line x1="213.53" y1="1.90" x2="213.53" y2="3.10" stroke="#555" stroke-width="0.6"/><line x1="213.53" y1="217.90" x2="213.53" y2="219.10" stroke="#555" stroke-width="0.6"/><line x1="2.90" y1="212.53" x2="4.10" y2="212.53" stroke="#555" stroke-width="0.6"/><line x1="218.90" y1="212.53" x2="220.10" y2="212.53" stroke="#555" stroke-width="0.6"/><line x1="215.32" y1="1.90" x2="215.32" y2="3.10" stroke="#9a9a9a" stroke-width="0.6"/><line x1="215.32" y1="217.90" x2="215.32" y2="219.10" stroke="#9a9a9a" stroke-width="0.6"/><line x1="2.90" y1="214.32" x2="4.10" y2="214.32" stroke="#9a9a9a" stroke-width="0.6"/><line x1="218.90" y1="214.32" x2="220.10" y2="214.32" stroke="#9a9a9a" stroke-width="0.6"/><line x1="217.11" y1="1.90" x2="217.11" y2="3.10" stroke="#555" stroke-width="0.6"/><line x1="217.11" y1="217.90" x2="217.11" y2="219.10" stroke="#555" stroke-width="0.6"/><line x1="2.90" y1="216.11" x2="4.10" y2="216.11" stroke="#555" stroke-width="0.6"/><line x1="218.90" y1="216.11" x2="220.10" y2="216.11" stroke="#555" stroke-width="0.6"/><line x1="218.90" y1="0.10" x2="218.90" y2="3.10" stroke="#9a9a9a" stroke-width="0.6"/><line x1="218.90" y1="217.90" x2="218.90" y2="220.90" stroke="#9a9a9a" stroke-width="0.6"/><line x1="1.10" y1="217.90" x2="4.10" y2="217.90" stroke="#9a9a9a" stroke-width="0.6"/><line x1="218.90" y1="217.90" x2="221.90" y2="217.90" stroke="#9a9a9a" stroke-width="0.6"/><line x1="111.50" y1="3.10" x2="111.50" y2="217.90" stroke="#8e8e8e" stroke-width="0.9"/><line x1="4.10" y1="110.50" x2="218.90" y2="110.50" stroke="#8e8e8e" stroke-width="0.9"/><circle cx="111.82" cy="66.45" r="1.85" fill="#20f820"/><circle cx="128.58" cy="69.76" r="1.85" fill="#20f820"/><circle cx="143.22" cy="79.44" r="1.85" fill="#20f820"/><circle cx="152.66" cy="94.07" r="1.85" fill="#20f820"/><circle cx="156.20" cy="110.83" r="1.85" fill="#20f820"/><circle cx="152.66" cy="127.83" r="1.85" fill="#20f820"/><circle cx="143.22" cy="142.47" r="1.85" fill="#20f820"/><circle cx="128.58" cy="152.38" r="1.85" fill="#20f820"/><circle cx="111.82" cy="155.45" r="1.85" fill="#20f820"/><circle cx="94.82" cy="152.38" r="1.85" fill="#20f820"/><circle cx="79.95" cy="142.47" r="1.85" fill="#20f820"/><circle cx="70.27" cy="127.83" r="1.85" fill="#20f820"/><circle cx="66.73" cy="110.83" r="1.85" fill="#20f820"/><circle cx="70.27" cy="94.07" r="1.85" fill="#20f820"/><circle cx="79.95" cy="79.44" r="1.85" fill="#20f820"/><circle cx="94.82" cy="69.76" r="1.85" fill="#20f820"/><circle cx="104.74" cy="85.81" r="1.85" fill="#20f820"/><circle cx="118.43" cy="85.81" r="1.85" fill="#20f820"/><circle cx="92.94" cy="92.42" r="1.85" fill="#20f820"/><circle cx="130.23" cy="92.42" r="1.85" fill="#20f820"/><circle cx="86.33" cy="104.22" r="1.85" fill="#20f820"/><circle cx="136.84" cy="104.22" r="1.85" fill="#20f820"/><circle cx="86.33" cy="117.68" r="1.85" fill="#20f820"/><circle cx="136.84" cy="117.68" r="1.85" fill="#20f820"/><circle cx="92.94" cy="129.48" r="1.85" fill="#20f820"/><circle cx="130.23" cy="129.48" r="1.85" fill="#20f820"/><circle cx="104.74" cy="136.09" r="1.85" fill="#20f820"/><circle cx="118.43" cy="136.09" r="1.85" fill="#20f820"/><circle cx="104.27" cy="103.75" r="1.85" fill="#20f820"/><circle cx="118.90" cy="103.75" r="1.85" fill="#20f820"/><circle cx="104.27" cy="118.39" r="1.85" fill="#20f820"/><circle cx="118.90" cy="118.39" r="1.85" fill="#20f820"/><circle cx="86.33" cy="85.81" r="1.1" fill="#1ad01a"/><circle cx="136.84" cy="85.81" r="1.1" fill="#1ad01a"/><circle cx="86.33" cy="136.09" r="1.1" fill="#1ad01a"/><circle cx="136.84" cy="136.09" r="1.1" fill="#1ad01a"/></svg></div>
<div class="t" style="left:369.00px;top:302px;font-size:7.122px;line-height:8.546px;color:#161616;font-weight:400;transform:scaleX(0.9856);-webkit-text-stroke:0.12px #161616;">С/Ш:</div>
<div class="t" style="left:389.20px;top:302px;font-size:7.122px;line-height:8.546px;color:#161616;font-weight:400;transform:scaleX(0.9741);-webkit-text-stroke:0.12px #161616;">37.0</div>
<div style="left:517.20px;top:299.20px;width:61.40px;height:12.60px;background:linear-gradient(180deg,#f0f0f0 0%,#e6e6e6 46%,#cdcdcd 54%,#c5c5c5 100%);border:1px solid #999;border-radius:2px;box-sizing:border-box"></div>
<div style="left:570.60px;top:304.00px;width:0;height:0;border-left:2.1px solid transparent;border-right:2.1px solid transparent;border-top:2.9px solid #111"></div>
<div class="t" style="left:519.60px;top:302px;font-size:7.122px;line-height:8.546px;color:#111;font-weight:400;transform:scaleX(0.9906);-webkit-text-stroke:0.12px #111;">Затухание</div>
<div style="left:365.20px;top:333.60px;width:221.50px;height:40.80px;background:#f8f8f8;border:1px solid #bebebe;border-radius:2px;box-sizing:border-box"></div>
<div style="left:368.10px;top:319.90px;width:53.50px;height:13.90px;background:#c6c6c6;border:1px solid #acacac;border-bottom:none;border-radius:2px 2px 0 0;box-sizing:border-box"></div>
<div class="t" style="left:372.50px;top:323px;font-size:7.776px;line-height:9.331px;color:#111;font-weight:700;transform:scaleX(0.9662);-webkit-text-stroke:0.12px #111;">Статистика:</div>
<div class="t" style="left:387.00px;top:352px;font-size:7.122px;line-height:8.546px;color:#161616;font-weight:400;transform:scaleX(0.9627);-webkit-text-stroke:0.12px #161616;">Синхронизм декодера</div>
<div style="left:463.20px;top:351.20px;width:6.6px;height:6.6px;border-radius:50%;background:radial-gradient(circle at 40% 35%,#9ae89a,#3cb83c 50%,#1d7d1d 100%);"></div>
<div class="t" style="left:472.00px;top:352px;font-size:7.122px;line-height:8.546px;color:#161616;font-weight:400;transform:scaleX(0.9899);-webkit-text-stroke:0.12px #161616;">Да</div>
</div></body></html>
